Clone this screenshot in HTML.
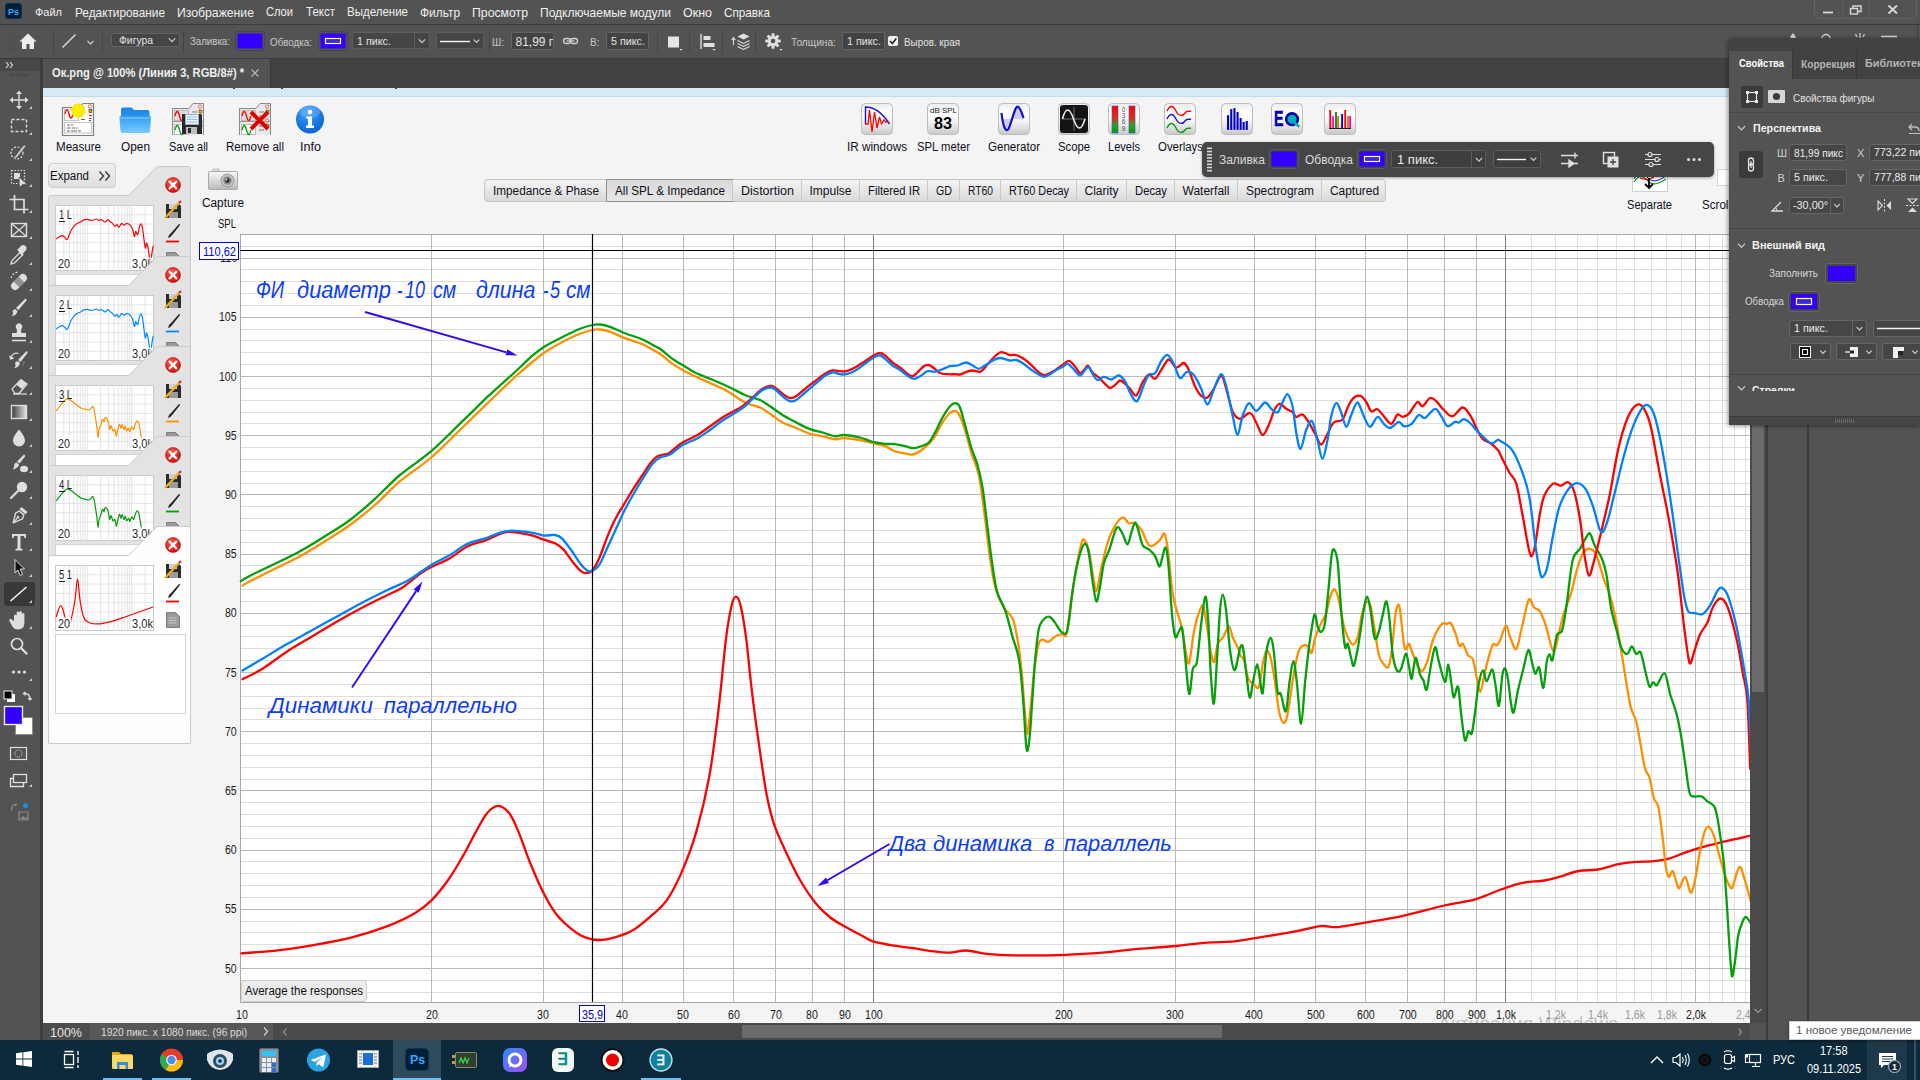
<!DOCTYPE html>
<html lang="ru"><head><meta charset="utf-8"><title>Ок.png @ 100% (Линия 3, RGB/8#) *</title>
<style>
html,body{margin:0;padding:0;}
body{width:1920px;height:1080px;overflow:hidden;position:relative;background:#535353;font-family:"Liberation Sans",sans-serif;}
.a{position:absolute;}
.t{position:absolute;white-space:pre;transform-origin:0 50%;}
svg{overflow:visible;}
</style></head><body>

<div class="a" id="canvas" style="left:43px;top:88px;width:1707px;height:935px;background:#f4f4f4;overflow:hidden;">
</div>
<div class="a" style="left:43px;top:88px;width:1707px;height:8px;background:#d6e9f7;"></div>
<div class="a" style="left:43px;top:96px;width:1707px;height:1px;background:#c4daeb;"></div>
<div class="a" style="left:233px;top:88px;width:2px;height:1px;background:#3a4650;"></div>
<div class="a" style="left:281px;top:88px;width:2px;height:1px;background:#3a4650;"></div>
<div class="a" style="left:395px;top:88px;width:2px;height:1px;background:#3a4650;"></div>
<svg class="a" style="left:0;top:0;" width="1750" height="1080" viewBox="0 0 1750 1080"><rect x="240" y="234" width="1510" height="768" fill="#fff"/><path d="M240 992.5H1750M240 980.5H1750M240 956.5H1750M240 944.5H1750M240 932.5H1750M240 921.5H1750M240 897.5H1750M240 885.5H1750M240 873.5H1750M240 861.5H1750M240 838.5H1750M240 826.5H1750M240 814.5H1750M240 802.5H1750M240 779.5H1750M240 767.5H1750M240 755.5H1750M240 743.5H1750M240 719.5H1750M240 708.5H1750M240 696.5H1750M240 684.5H1750M240 660.5H1750M240 648.5H1750M240 636.5H1750M240 625.5H1750M240 601.5H1750M240 589.5H1750M240 577.5H1750M240 565.5H1750M240 542.5H1750M240 530.5H1750M240 518.5H1750M240 506.5H1750M240 483.5H1750M240 471.5H1750M240 459.5H1750M240 447.5H1750M240 423.5H1750M240 412.5H1750M240 400.5H1750M240 388.5H1750M240 364.5H1750M240 352.5H1750M240 340.5H1750M240 329.5H1750M240 305.5H1750M240 293.5H1750M240 281.5H1750M240 269.5H1750M240 246.5H1750" stroke="#dedede" stroke-width="1" fill="none"/><path d="M1531.5 234V1002M1555.5 234V1002M1577.5 234V1002M1597.5 234V1002M1616.5 234V1002M1634.5 234V1002M1651.5 234V1002M1666.5 234V1002M1681.5 234V1002M1709.5 234V1002M1722.5 234V1002M1734.5 234V1002M1745.5 234V1002" stroke="#dedede" stroke-width="1" fill="none"/><path d="M240 968.5H1750M240 909.5H1750M240 850.5H1750M240 790.5H1750M240 731.5H1750M240 672.5H1750M240 613.5H1750M240 554.5H1750M240 494.5H1750M240 435.5H1750M240 376.5H1750M240 317.5H1750M240 258.5H1750" stroke="#b9b9b9" stroke-width="1" fill="none"/><path d="M431.5 234V1002M543.5 234V1002M622.5 234V1002M683.5 234V1002M733.5 234V1002M775.5 234V1002M812.5 234V1002M844.5 234V1002M1063.5 234V1002M1175.5 234V1002M1254.5 234V1002M1315.5 234V1002M1365.5 234V1002M1407.5 234V1002M1444.5 234V1002M1476.5 234V1002M1695.5 234V1002" stroke="#b9b9b9" stroke-width="1" fill="none"/><path d="M873.5 234V1002M1505.5 234V1002" stroke="#7d7d7d" stroke-width="1" fill="none"/><path d="M240.5 234V1002M240 1002.5H1750M240 234.5H1750" stroke="#a8a8a8" stroke-width="1" fill="none"/><path d="M241.5 953.3C247.5 952.8 265.6 951.8 277.8 950.4C290.0 949.0 302.5 947.0 314.8 944.8C327.2 942.7 339.5 940.6 351.9 937.4C364.2 934.2 378.4 929.6 388.9 925.6C399.4 921.5 407.7 917.5 414.8 913.3C421.9 909.1 425.9 905.9 431.5 900.4C437.0 894.8 442.9 887.4 448.1 880.0C453.4 872.6 458.3 864.0 463.0 855.9C467.6 847.9 471.9 839.0 475.9 831.9C479.9 824.8 483.3 817.7 487.0 813.3C490.7 809.0 494.4 805.9 498.1 805.9C501.9 805.9 505.9 809.0 509.3 813.3C512.7 817.7 515.1 823.8 518.5 831.9C521.9 839.9 525.6 851.6 529.6 861.5C533.6 871.4 538.3 882.5 542.6 891.1C546.9 899.8 550.9 907.2 555.6 913.3C560.2 919.5 565.4 924.1 570.4 928.1C575.3 932.2 580.2 935.4 585.2 937.4C590.1 939.4 595.1 940.0 600.0 940.0C604.9 940.0 609.3 939.1 614.8 937.4C620.4 935.7 627.2 933.7 633.3 930.0C639.5 926.3 646.3 920.1 651.9 915.2C657.4 910.2 661.7 907.5 666.7 900.4C671.6 893.3 676.5 884.0 681.5 872.6C686.4 861.2 691.7 847.9 696.3 831.9C700.9 815.8 705.6 796.7 709.3 776.3C713.0 755.9 715.7 732.5 718.5 709.6C721.3 686.8 723.8 656.5 725.9 639.3C728.1 622.0 729.8 613.0 731.5 605.9C733.1 598.8 734.4 596.7 735.9 596.7C737.5 596.7 739.0 598.8 740.7 605.9C742.5 613.0 744.4 625.1 746.3 639.3C748.1 653.5 749.7 673.2 751.9 691.1C754.0 709.0 756.8 729.4 759.3 746.7C761.7 764.0 764.2 781.9 766.7 794.8C769.1 807.8 771.0 815.2 774.1 824.4C777.2 833.7 780.9 841.1 785.2 850.4C789.5 859.6 795.1 871.4 800.0 880.0C804.9 888.6 809.9 896.0 814.8 902.2C819.8 908.4 824.7 913.0 829.6 917.0C834.6 921.0 838.9 923.1 844.4 926.3C850.0 929.5 858.1 933.8 863.0 936.3C867.8 938.8 868.5 940.0 873.8 941.6C879.0 943.1 887.5 944.5 894.4 945.7C901.2 946.8 908.7 947.5 915.0 948.4C921.3 949.4 926.5 950.5 932.2 951.2C937.9 951.9 943.6 952.7 949.4 952.6C955.1 952.4 960.3 950.3 966.6 950.5C972.9 950.7 979.2 953.1 987.2 953.9C995.2 954.7 1004.4 955.1 1014.7 955.3C1025.0 955.5 1037.6 955.5 1049.1 955.3C1060.5 955.1 1073.1 954.5 1083.4 953.9C1093.8 953.4 1102.3 952.7 1110.9 951.9C1119.5 951.1 1124.1 950.1 1135.0 949.1C1145.9 948.2 1164.2 947.1 1176.2 946.0C1188.3 944.9 1198.0 943.3 1207.2 942.6C1216.4 941.8 1223.2 942.3 1231.2 941.6C1239.3 940.8 1244.4 939.8 1255.3 938.1C1266.2 936.4 1285.7 933.3 1296.6 931.2C1307.4 929.2 1313.8 926.8 1320.6 926.1C1327.5 925.4 1330.4 927.7 1337.8 927.1C1345.3 926.6 1354.4 924.5 1365.3 922.7C1376.2 920.8 1389.9 918.6 1403.1 915.8C1416.3 912.9 1432.3 908.2 1444.4 905.5C1456.4 902.7 1466.1 901.9 1475.3 899.3C1484.5 896.7 1493.3 892.2 1499.4 890.0C1505.5 887.8 1507.5 887.1 1511.8 885.8C1516.1 884.5 1519.7 883.1 1525.2 882.3C1530.6 881.4 1538.7 881.4 1544.4 880.5C1550.1 879.6 1553.5 878.5 1559.2 876.9C1564.9 875.3 1572.1 872.2 1578.5 871.0C1584.9 869.8 1591.1 870.7 1597.7 869.5C1604.4 868.4 1612.5 865.4 1618.5 864.2C1624.4 863.0 1627.3 862.6 1633.3 862.1C1639.2 861.6 1648.1 861.8 1654.0 861.2C1659.9 860.6 1663.9 859.9 1668.8 858.6C1673.7 857.2 1678.2 855.1 1683.6 853.2C1689.0 851.4 1694.5 849.3 1701.4 847.3C1708.3 845.3 1716.8 843.4 1725.1 841.4C1733.3 839.4 1746.8 836.5 1751.1 835.5" stroke="#ff0000" stroke-width="2.3" fill="none" stroke-linejoin="round" stroke-linecap="round"/><path d="M242.5 585.5C243.8 584.8 244.6 584.0 250.0 581.2C255.4 578.5 266.7 572.9 275.0 568.8C283.3 564.6 291.7 560.8 300.0 556.2C308.3 551.7 316.7 546.5 325.0 541.2C333.3 536.0 341.7 531.0 350.0 525.0C358.3 519.0 366.7 512.3 375.0 505.0C383.3 497.7 390.6 489.2 400.0 481.2C409.4 473.3 420.8 466.5 431.2 457.5C441.7 448.5 453.0 436.7 462.5 427.5C472.0 418.3 479.6 410.8 488.2 402.5C496.9 394.2 507.2 384.2 514.5 377.5C521.8 370.8 526.6 366.8 531.8 362.5C536.9 358.2 540.1 355.4 545.2 352.0C550.4 348.6 556.7 345.0 562.5 342.0C568.3 339.0 575.0 335.8 580.0 333.8C585.0 331.8 589.2 330.7 592.5 330.0C595.8 329.3 597.1 329.2 600.0 329.5C602.9 329.8 605.8 330.3 610.0 331.8C614.2 333.2 619.6 336.2 625.0 338.2C630.4 340.3 637.1 341.9 642.5 344.2C647.9 346.6 654.6 350.9 657.5 352.5C660.4 354.1 657.5 351.9 660.0 353.8C662.5 355.6 668.8 361.0 672.5 363.8C676.2 366.5 678.8 367.9 682.5 370.0C686.2 372.1 690.4 374.1 695.0 376.2C699.6 378.4 704.6 380.5 710.0 383.0C715.4 385.5 721.7 388.0 727.5 391.2C733.3 394.5 739.6 399.8 745.0 402.5C750.4 405.2 755.8 405.6 760.0 407.5C764.2 409.4 766.2 411.2 770.0 413.8C773.8 416.2 778.3 420.2 782.5 422.5C786.7 424.8 790.4 425.6 795.0 427.5C799.6 429.4 805.4 432.3 810.0 433.8C814.6 435.2 818.3 435.3 822.5 436.2C826.7 437.2 831.5 438.9 835.0 439.2C838.5 439.6 839.6 438.1 843.8 438.2C847.9 438.4 855.2 439.2 860.0 440.0C864.8 440.8 868.3 442.0 872.5 443.0C876.7 444.0 881.2 444.9 885.0 446.2C888.8 447.6 891.9 450.1 895.0 451.2C898.1 452.4 900.8 452.7 903.8 453.2C906.7 453.8 909.8 454.8 912.5 454.5C915.2 454.2 917.3 453.0 920.0 451.2C922.7 449.5 926.2 446.2 928.8 443.8C931.2 441.2 932.7 439.8 935.0 436.2C937.3 432.7 940.0 426.4 942.5 422.5C945.0 418.6 947.8 414.9 950.0 413.0C952.2 411.1 954.1 410.7 955.8 411.2C957.4 411.8 958.5 413.1 960.0 416.2C961.5 419.4 963.1 424.0 965.0 430.0C966.9 436.0 969.0 445.0 971.2 452.5C973.5 460.0 976.6 464.9 978.8 475.0C980.9 485.1 982.6 499.5 984.4 513.3C986.3 527.1 988.1 545.3 990.0 557.8C991.9 570.3 993.2 580.0 995.6 588.3C997.9 596.7 1001.0 602.7 1003.9 607.8C1006.8 612.9 1010.5 613.3 1012.8 618.9C1015.1 624.4 1016.2 631.9 1017.8 641.1C1019.3 650.4 1020.8 662.9 1021.9 674.4C1023.1 686.0 1023.8 700.6 1024.7 710.6C1025.6 720.5 1026.6 734.2 1027.5 734.2C1028.4 734.2 1029.1 721.4 1030.3 710.6C1031.4 699.7 1033.1 680.0 1034.4 668.9C1035.8 657.8 1037.2 648.8 1038.6 643.9C1040.0 639.0 1041.2 640.0 1042.8 639.7C1044.4 639.4 1046.2 642.5 1048.3 641.9C1050.4 641.4 1053.0 637.7 1055.3 636.4C1057.6 635.1 1060.4 634.5 1062.2 634.2C1064.1 633.8 1065.0 639.0 1066.4 634.2C1067.8 629.3 1068.9 615.9 1070.6 605.0C1072.2 594.1 1074.3 579.3 1076.1 568.9C1078.0 558.5 1080.3 547.3 1081.7 542.5C1083.1 537.7 1083.3 539.1 1084.4 540.3C1085.6 541.4 1087.2 543.8 1088.6 549.4C1090.0 555.1 1091.5 567.5 1092.8 574.4C1094.1 581.4 1095.0 592.0 1096.4 591.1C1097.8 590.2 1099.2 577.2 1101.1 568.9C1103.1 560.6 1105.7 548.3 1108.1 541.1C1110.4 533.9 1112.6 529.8 1115.0 525.8C1117.4 521.9 1120.2 518.0 1122.5 517.5C1124.8 517.0 1126.9 522.1 1128.9 523.1C1130.9 524.0 1132.4 521.9 1134.4 523.1C1136.5 524.2 1138.8 526.2 1141.4 530.0C1143.9 533.8 1146.7 544.1 1149.7 545.8C1152.7 547.6 1157.0 542.6 1159.4 540.6C1161.9 538.5 1163.1 532.1 1164.4 533.6C1165.8 535.1 1166.3 538.9 1167.8 549.4C1169.3 560.0 1171.0 583.7 1173.3 596.7C1175.6 609.6 1179.6 618.0 1181.7 627.2C1183.8 636.5 1184.6 646.3 1185.8 652.2C1187.1 658.1 1187.8 666.5 1189.2 662.8C1190.6 659.1 1192.4 638.7 1194.2 630.0C1195.9 621.3 1198.2 614.5 1199.7 610.6C1201.2 606.6 1202.2 604.1 1203.3 606.4C1204.5 608.7 1205.4 616.8 1206.7 624.4C1207.9 632.1 1209.6 646.0 1210.8 652.2C1212.1 658.5 1213.0 663.3 1214.2 661.9C1215.3 660.6 1216.2 648.1 1217.8 643.9C1219.3 639.7 1221.5 639.9 1223.3 636.9C1225.2 634.0 1227.3 626.2 1228.9 626.4C1230.5 626.6 1231.4 634.5 1233.1 638.3C1234.7 642.2 1237.5 646.7 1238.6 649.4C1239.8 652.2 1239.1 653.1 1240.0 655.0C1240.9 656.9 1242.8 656.6 1244.2 660.6C1245.6 664.5 1246.7 674.7 1248.3 678.6C1250.0 682.5 1252.1 682.8 1253.9 684.2C1255.6 685.6 1257.4 690.4 1258.9 686.9C1260.4 683.5 1261.5 669.4 1262.8 663.3C1264.0 657.3 1265.1 651.8 1266.4 650.8C1267.7 649.9 1269.2 652.9 1270.6 657.8C1271.9 662.6 1273.3 671.2 1274.7 680.0C1276.1 688.8 1277.5 703.5 1278.9 710.6C1280.3 717.6 1281.7 721.6 1283.1 722.5C1284.4 723.4 1285.6 723.2 1287.2 716.1C1288.8 709.0 1290.9 690.6 1292.8 680.0C1294.6 669.4 1296.5 658.0 1298.3 652.2C1300.2 646.4 1302.3 646.2 1303.9 645.3C1305.5 644.4 1306.8 645.4 1308.1 646.7C1309.4 647.9 1310.5 654.2 1311.7 652.8C1312.8 651.4 1313.5 643.1 1315.0 638.3C1316.5 633.6 1318.7 628.6 1320.6 624.4C1322.4 620.3 1324.5 618.0 1326.1 613.3C1327.7 608.7 1328.9 600.7 1330.3 596.7C1331.7 592.6 1333.1 588.7 1334.4 589.2C1335.8 589.6 1337.0 593.1 1338.6 599.4C1340.2 605.8 1342.3 620.3 1344.2 627.2C1346.0 634.2 1348.1 638.2 1349.7 641.1C1351.3 644.0 1352.5 645.4 1353.9 644.4C1355.3 643.5 1356.7 640.7 1358.1 635.6C1359.4 630.4 1360.8 618.9 1362.2 613.3C1363.6 607.8 1365.0 603.4 1366.4 602.2C1367.8 601.1 1369.2 601.8 1370.6 606.4C1371.9 611.0 1373.3 621.9 1374.7 630.0C1376.1 638.1 1377.5 649.4 1378.9 655.0C1380.3 660.6 1381.4 661.4 1383.1 663.3C1384.7 665.3 1387.1 669.4 1388.6 666.7C1390.1 663.9 1391.1 655.6 1392.2 646.7C1393.4 637.8 1394.4 620.3 1395.6 613.3C1396.7 606.4 1398.0 604.1 1398.9 605.0C1399.8 605.9 1400.3 612.4 1401.1 618.9C1401.9 625.4 1403.1 638.8 1403.9 643.9C1404.7 649.0 1405.0 649.4 1405.8 649.4C1406.7 649.4 1407.8 643.4 1408.9 643.9C1410.0 644.4 1410.7 648.5 1412.2 652.2C1413.7 655.9 1416.1 663.0 1417.8 666.1C1419.5 669.2 1420.9 671.8 1422.5 670.8C1424.1 669.9 1425.7 665.7 1427.5 660.6C1429.3 655.4 1430.7 645.7 1433.1 639.7C1435.4 633.7 1439.1 627.1 1441.4 624.4C1443.7 621.8 1445.4 624.1 1446.9 623.9C1448.5 623.7 1449.2 621.6 1450.6 623.1C1451.9 624.5 1453.8 629.0 1455.3 632.8C1456.8 636.6 1458.1 644.0 1459.4 645.8C1460.7 647.7 1461.7 642.4 1463.1 643.9C1464.4 645.4 1466.2 652.5 1467.8 655.0C1469.4 657.5 1471.4 655.9 1472.8 659.2C1474.2 662.4 1474.9 669.0 1476.1 674.4C1477.4 679.9 1478.9 691.9 1480.3 691.9C1481.7 691.9 1483.1 680.1 1484.4 674.4C1485.8 668.8 1487.2 662.7 1488.6 657.8C1490.0 652.8 1491.4 646.8 1492.8 644.7C1494.2 642.6 1495.7 646.0 1496.9 645.3C1498.1 644.6 1498.5 643.8 1500.0 640.6C1501.5 637.3 1504.2 626.3 1505.9 625.8C1507.6 625.3 1508.6 633.8 1510.4 637.6C1512.1 641.5 1514.3 650.9 1516.3 648.9C1518.3 646.9 1520.1 634.0 1522.2 625.8C1524.3 617.6 1526.8 602.8 1528.7 599.7C1530.7 596.7 1532.2 605.5 1534.1 607.4C1535.9 609.4 1538.0 608.5 1540.0 611.6C1542.0 614.6 1543.7 619.2 1545.9 625.8C1548.1 632.4 1551.1 650.0 1553.3 651.0C1555.5 651.9 1557.5 637.9 1559.2 631.7C1561.0 625.5 1561.7 620.4 1563.7 613.9C1565.6 607.5 1568.8 600.6 1571.1 593.2C1573.3 585.8 1575.0 576.2 1577.0 569.5C1579.0 562.9 1580.8 556.7 1582.9 553.2C1585.0 549.8 1587.5 548.5 1589.7 548.8C1591.9 549.0 1593.9 549.8 1596.2 554.7C1598.6 559.7 1601.2 571.0 1603.6 578.4C1606.1 585.8 1608.8 591.2 1611.0 599.1C1613.3 607.0 1615.0 615.4 1617.0 625.8C1618.9 636.2 1620.7 648.1 1622.9 661.3C1625.1 674.6 1628.1 695.1 1630.3 705.2C1632.5 715.2 1634.5 714.8 1636.2 721.5C1637.9 728.1 1639.2 737.3 1640.7 745.1C1642.1 753.0 1643.6 763.4 1645.1 768.8C1646.6 774.3 1648.1 772.8 1649.5 777.7C1651.0 782.7 1652.5 793.5 1654.0 798.5C1655.5 803.4 1656.9 800.4 1658.4 807.3C1659.9 814.2 1661.6 830.0 1662.9 839.9C1664.1 849.8 1664.8 860.4 1665.8 866.6C1666.8 872.7 1667.7 876.2 1668.8 876.9C1669.9 877.7 1671.4 870.3 1672.6 871.0C1673.9 871.7 1675.1 878.5 1676.2 881.4C1677.3 884.2 1677.7 888.9 1679.2 888.2C1680.6 887.4 1683.4 876.6 1685.1 876.9C1686.8 877.3 1688.4 887.8 1689.5 890.3C1690.7 892.7 1690.9 893.7 1691.9 891.7C1692.9 889.8 1694.1 885.1 1695.4 878.4C1696.8 871.7 1698.4 859.4 1699.9 851.8C1701.4 844.1 1702.9 836.7 1704.3 832.5C1705.7 828.3 1706.7 826.3 1708.2 826.6C1709.7 826.8 1711.4 829.3 1713.2 834.0C1715.0 838.7 1717.2 847.8 1719.1 854.7C1721.1 861.6 1723.3 870.3 1725.1 875.4C1726.8 880.6 1728.3 883.8 1729.5 885.8C1730.7 887.8 1731.2 889.5 1732.5 887.3C1733.7 885.1 1735.6 875.8 1736.9 872.5C1738.2 869.1 1739.2 866.2 1740.5 867.2C1741.7 868.1 1742.5 872.6 1744.3 878.4C1746.1 884.2 1750.0 898.1 1751.1 902.1" stroke="#ff8e00" stroke-width="2.3" fill="none" stroke-linejoin="round" stroke-linecap="round"/><path d="M240.8 581.2C242.3 580.3 244.3 578.7 250.0 575.8C255.7 572.8 266.7 567.8 275.0 563.8C283.3 559.7 291.7 555.8 300.0 551.2C308.3 546.7 316.7 541.5 325.0 536.2C333.3 531.0 341.7 526.2 350.0 520.0C358.3 513.8 366.7 506.2 375.0 498.8C383.3 491.2 390.6 482.9 400.0 475.0C409.4 467.1 420.8 460.2 431.2 451.2C441.7 442.3 453.0 430.4 462.5 421.2C472.0 412.1 479.6 404.4 488.2 396.2C496.9 388.1 507.2 379.2 514.5 372.5C521.8 365.8 526.7 360.6 531.8 356.2C536.8 351.9 539.9 349.5 545.0 346.2C550.1 343.0 556.7 339.9 562.5 337.0C568.3 334.1 575.0 330.8 580.0 328.8C585.0 326.8 589.2 325.7 592.5 325.0C595.8 324.3 597.1 324.2 600.0 324.5C602.9 324.8 605.8 325.3 610.0 326.8C614.2 328.2 619.6 331.1 625.0 333.2C630.4 335.4 637.1 337.1 642.5 339.5C647.9 341.9 654.6 346.0 657.5 347.5C660.4 349.0 657.5 346.9 660.0 348.8C662.5 350.6 668.8 356.0 672.5 358.8C676.2 361.5 678.8 362.7 682.5 365.0C686.2 367.3 690.4 370.2 695.0 372.5C699.6 374.8 704.2 376.2 710.0 378.8C715.8 381.2 724.2 384.8 730.0 387.5C735.8 390.2 740.0 392.9 745.0 395.0C750.0 397.1 755.8 398.1 760.0 400.0C764.2 401.9 766.2 403.8 770.0 406.2C773.8 408.8 778.3 412.4 782.5 415.0C786.7 417.6 790.4 419.4 795.0 421.8C799.6 424.1 805.4 427.5 810.0 429.2C814.6 431.0 818.3 431.3 822.5 432.5C826.7 433.7 831.5 435.8 835.0 436.2C838.5 436.7 839.6 434.8 843.8 435.0C847.9 435.2 855.2 436.4 860.0 437.5C864.8 438.6 868.3 440.7 872.5 441.8C876.7 442.8 881.2 443.3 885.0 443.8C888.8 444.2 891.7 443.8 895.0 444.2C898.3 444.7 901.9 445.6 905.0 446.2C908.1 446.9 911.0 448.2 913.8 448.2C916.5 448.2 918.8 447.2 921.2 446.2C923.8 445.3 926.5 444.8 928.8 442.5C931.0 440.2 932.7 436.7 935.0 432.5C937.3 428.3 940.0 421.9 942.5 417.5C945.0 413.1 947.8 408.6 950.0 406.2C952.2 403.9 954.1 403.0 955.8 403.2C957.4 403.5 958.5 403.9 960.0 407.5C961.5 411.1 963.1 418.3 965.0 425.0C966.9 431.7 969.2 440.8 971.2 447.5C973.3 454.2 975.6 458.3 977.5 465.0C979.4 471.7 981.1 479.4 982.5 487.5C983.9 495.6 984.4 501.6 985.8 513.3C987.3 525.0 989.5 544.8 991.4 557.8C993.2 570.7 994.6 582.3 996.9 591.1C999.3 599.9 1002.7 603.1 1005.3 610.6C1007.8 618.0 1009.9 627.2 1012.2 635.6C1014.5 643.9 1017.3 649.4 1019.2 660.6C1021.0 671.7 1022.3 689.3 1023.3 702.2C1024.4 715.2 1024.9 730.2 1025.6 738.3C1026.2 746.4 1026.7 752.2 1027.5 750.8C1028.3 749.4 1029.1 743.7 1030.3 730.0C1031.4 716.3 1033.1 685.6 1034.4 668.9C1035.8 652.2 1037.0 638.3 1038.6 630.0C1040.2 621.7 1042.3 621.1 1044.2 618.9C1046.0 616.7 1047.9 616.2 1049.7 616.9C1051.6 617.6 1053.4 620.6 1055.3 623.1C1057.1 625.5 1059.0 629.8 1060.8 631.4C1062.7 633.0 1065.0 634.9 1066.4 632.8C1067.8 630.7 1068.0 626.8 1069.2 618.9C1070.3 611.0 1071.7 595.7 1073.3 585.6C1075.0 575.4 1077.0 564.7 1078.9 557.8C1080.7 550.8 1082.8 544.8 1084.4 543.9C1086.1 543.0 1087.2 545.7 1088.6 552.2C1090.0 558.7 1091.5 574.6 1092.8 582.8C1094.1 591.0 1095.2 600.5 1096.4 601.4C1097.5 602.3 1098.5 594.7 1099.7 588.3C1101.0 582.0 1102.3 569.8 1103.9 563.3C1105.5 556.9 1107.6 554.8 1109.4 549.4C1111.3 544.1 1113.5 535.1 1115.0 531.4C1116.5 527.7 1117.0 526.8 1118.3 527.2C1119.6 527.7 1121.2 531.3 1122.8 534.2C1124.3 537.0 1126.0 544.9 1127.5 544.4C1129.0 544.0 1130.4 535.0 1131.7 531.4C1133.0 527.7 1134.1 522.5 1135.3 522.5C1136.4 522.5 1137.4 527.6 1138.6 531.4C1139.9 535.2 1140.9 542.2 1142.8 545.3C1144.6 548.4 1147.6 548.1 1149.7 550.0C1151.8 551.9 1153.7 553.6 1155.3 556.4C1156.9 559.2 1158.3 566.4 1159.4 566.7C1160.6 566.9 1161.2 561.0 1162.2 557.8C1163.2 554.6 1164.5 546.6 1165.6 547.5C1166.6 548.4 1167.3 552.4 1168.3 563.3C1169.4 574.3 1170.8 601.1 1171.9 613.3C1173.1 625.6 1174.1 633.9 1175.3 636.9C1176.4 640.0 1177.7 632.8 1178.9 631.4C1180.0 630.0 1181.2 624.2 1182.2 628.6C1183.3 633.0 1184.1 646.9 1185.3 657.8C1186.4 668.7 1187.9 692.0 1189.2 693.9C1190.4 695.7 1191.5 674.2 1192.8 668.9C1194.1 663.6 1195.6 669.4 1196.9 661.9C1198.3 654.5 1199.7 635.3 1201.1 624.4C1202.5 613.6 1204.1 597.6 1205.3 596.7C1206.4 595.7 1207.1 605.9 1208.1 618.9C1209.0 631.9 1209.9 660.3 1210.8 674.4C1211.8 688.6 1212.9 705.9 1213.9 703.6C1214.9 701.3 1215.9 676.1 1216.9 660.6C1218.0 645.0 1219.0 621.5 1220.0 610.6C1221.0 599.6 1221.8 594.7 1222.8 594.7C1223.8 594.7 1224.9 601.0 1226.1 610.6C1227.4 620.1 1228.9 642.3 1230.3 652.2C1231.7 662.2 1233.1 669.8 1234.4 670.3C1235.8 670.7 1237.7 658.7 1238.6 655.0C1239.5 651.3 1239.3 649.4 1240.0 648.1C1240.7 646.7 1241.8 642.7 1242.8 646.7C1243.8 650.6 1245.0 663.2 1246.1 671.7C1247.3 680.1 1248.5 696.1 1249.7 697.5C1250.9 698.9 1252.1 685.6 1253.3 680.0C1254.6 674.4 1256.1 664.2 1257.2 664.2C1258.3 664.2 1259.1 675.3 1260.0 680.0C1260.9 684.7 1261.7 697.1 1262.8 692.5C1263.8 687.9 1265.1 661.3 1266.4 652.2C1267.7 643.1 1269.3 637.8 1270.6 637.8C1271.8 637.8 1272.7 643.3 1273.9 652.2C1275.0 661.1 1276.3 684.2 1277.5 691.1C1278.7 698.1 1279.4 690.5 1280.8 693.9C1282.2 697.3 1284.4 713.2 1285.8 711.4C1287.3 709.5 1288.2 691.2 1289.4 682.8C1290.7 674.4 1292.1 661.1 1293.3 661.1C1294.6 661.1 1295.6 672.4 1296.9 682.8C1298.2 693.2 1299.7 724.1 1301.1 723.6C1302.5 723.1 1303.9 693.3 1305.3 680.0C1306.7 666.7 1307.9 654.8 1309.4 643.9C1311.0 633.0 1313.1 617.5 1314.4 614.7C1315.8 611.9 1316.7 624.4 1317.8 627.2C1318.9 630.1 1320.0 632.4 1321.1 631.9C1322.3 631.5 1323.5 631.2 1324.7 624.4C1325.9 617.6 1327.2 602.7 1328.3 591.1C1329.5 579.5 1330.6 561.9 1331.7 555.0C1332.7 548.1 1333.4 548.6 1334.4 550.0C1335.5 551.4 1336.6 552.8 1337.8 563.3C1338.9 573.9 1340.2 599.4 1341.4 613.3C1342.6 627.2 1343.9 641.6 1345.0 646.7C1346.1 651.8 1346.8 642.0 1347.8 643.9C1348.8 645.7 1350.1 654.2 1351.1 657.8C1352.1 661.4 1352.7 667.4 1353.9 665.6C1355.0 663.7 1356.4 655.8 1358.1 646.7C1359.7 637.5 1362.1 618.9 1363.6 610.6C1365.1 602.2 1366.1 596.7 1367.2 596.7C1368.4 596.7 1369.3 603.6 1370.6 610.6C1371.8 617.5 1373.3 634.9 1374.7 638.3C1376.1 641.8 1377.5 635.6 1378.9 631.4C1380.3 627.2 1381.8 618.3 1383.1 613.3C1384.3 608.3 1385.3 600.5 1386.4 601.4C1387.5 602.3 1388.4 610.0 1389.4 618.9C1390.5 627.8 1391.5 646.4 1392.8 655.0C1394.0 663.6 1395.6 668.0 1396.9 670.3C1398.3 672.6 1399.6 671.7 1401.1 668.9C1402.6 666.1 1404.5 654.1 1405.8 653.6C1407.1 653.1 1407.9 661.9 1408.9 666.1C1409.9 670.3 1410.6 680.0 1411.7 678.6C1412.8 677.2 1414.2 658.5 1415.6 657.8C1416.9 657.1 1418.7 670.7 1420.0 674.4C1421.3 678.1 1422.2 677.5 1423.3 680.0C1424.4 682.5 1425.5 691.6 1426.7 689.7C1427.8 687.9 1428.9 676.0 1430.3 668.9C1431.7 661.8 1433.6 648.6 1435.0 647.2C1436.4 645.8 1436.9 654.8 1438.6 660.6C1440.3 666.3 1443.4 681.2 1445.0 681.9C1446.6 682.6 1447.2 664.1 1448.3 664.7C1449.4 665.3 1450.7 680.1 1451.7 685.6C1452.6 691.0 1452.8 697.3 1453.9 697.5C1455.0 697.7 1456.8 683.8 1458.1 686.9C1459.3 690.0 1460.2 707.2 1461.4 716.1C1462.5 725.0 1463.8 737.7 1465.0 740.3C1466.2 742.8 1467.2 732.6 1468.3 731.4C1469.5 730.1 1470.7 736.7 1471.9 732.8C1473.1 728.8 1474.4 716.1 1475.6 707.8C1476.7 699.4 1477.6 689.0 1478.9 682.8C1480.1 676.5 1481.8 670.5 1483.1 670.3C1484.4 670.0 1485.1 681.5 1486.7 681.4C1488.2 681.2 1490.7 668.8 1492.2 669.4C1493.7 670.1 1494.4 679.5 1495.6 685.6C1496.7 691.6 1497.7 707.7 1498.9 705.8C1500.0 704.0 1501.4 680.6 1502.5 674.4C1503.6 668.3 1504.4 668.0 1505.3 668.9C1506.2 669.8 1507.1 674.4 1508.1 680.0C1509.0 685.6 1509.9 696.8 1510.8 702.2C1511.8 707.6 1512.5 714.4 1513.6 712.5C1514.8 710.6 1516.2 698.4 1517.8 691.1C1519.4 683.8 1521.6 675.7 1523.3 668.9C1525.1 662.0 1526.9 651.4 1528.3 650.0C1529.7 648.6 1530.5 656.6 1531.7 660.6C1532.8 664.5 1534.0 672.5 1535.3 673.6C1536.5 674.8 1537.8 665.1 1539.2 667.5C1540.5 669.9 1542.0 688.9 1543.3 687.8C1544.6 686.6 1545.9 666.1 1546.9 660.6C1548.0 655.0 1548.8 654.5 1549.7 654.4C1550.6 654.4 1551.3 663.1 1552.5 660.0C1553.7 656.9 1555.1 640.5 1556.7 635.6C1558.3 630.6 1560.5 635.3 1562.2 630.2C1563.8 625.1 1564.9 616.7 1566.6 605.1C1568.4 593.5 1570.3 570.0 1572.6 560.6C1574.8 551.3 1577.5 553.0 1580.0 548.8C1582.4 544.6 1585.6 537.9 1587.4 535.5C1589.1 533.0 1589.1 532.3 1590.3 534.0C1591.6 535.7 1592.8 541.6 1594.8 545.8C1596.7 550.0 1600.2 554.2 1602.2 559.2C1604.1 564.1 1605.1 567.3 1606.6 575.4C1608.1 583.6 1609.3 598.6 1611.0 608.0C1612.8 617.4 1615.2 625.0 1617.0 631.7C1618.7 638.4 1619.7 644.3 1621.4 648.0C1623.1 651.7 1625.6 654.2 1627.3 653.9C1629.1 653.7 1630.3 646.5 1631.8 646.5C1633.3 646.5 1634.7 652.9 1636.2 653.9C1637.7 654.9 1639.2 649.7 1640.7 652.4C1642.1 655.2 1643.6 664.5 1645.1 670.2C1646.6 675.9 1648.2 684.5 1649.5 686.5C1650.9 688.5 1651.9 682.3 1653.1 682.1C1654.3 681.8 1655.1 686.5 1656.9 685.0C1658.8 683.5 1662.4 672.7 1664.4 673.2C1666.3 673.7 1667.8 684.4 1668.8 688.0C1669.8 691.6 1669.0 690.7 1670.3 694.8C1671.5 698.9 1674.5 706.2 1676.2 712.6C1677.9 719.0 1679.2 724.9 1680.6 733.3C1682.1 741.7 1683.6 753.0 1685.1 762.9C1686.6 772.8 1688.0 787.0 1689.5 792.5C1691.0 798.1 1692.0 795.7 1694.0 796.4C1695.9 797.0 1699.1 795.5 1701.4 796.4C1703.6 797.2 1705.1 799.6 1707.3 801.4C1709.5 803.2 1712.7 802.9 1714.7 807.3C1716.7 811.8 1717.7 819.2 1719.1 828.1C1720.6 836.9 1722.3 848.8 1723.6 860.6C1724.8 872.5 1725.6 886.3 1726.5 899.1C1727.4 912.0 1728.2 926.3 1728.9 937.6C1729.6 949.0 1730.4 960.8 1731.0 967.2C1731.6 973.7 1731.7 977.6 1732.5 976.1C1733.2 974.6 1734.4 965.3 1735.4 958.4C1736.4 951.5 1737.1 940.8 1738.4 934.7C1739.6 928.5 1741.6 924.3 1742.8 921.3C1744.1 918.4 1744.4 916.6 1745.8 916.9C1747.2 917.2 1750.2 922.3 1751.1 923.4" stroke="#04a00c" stroke-width="2.3" fill="none" stroke-linejoin="round" stroke-linecap="round"/><path d="M242.5 679.2C245.8 677.5 255.0 673.4 262.5 668.8C270.0 664.1 279.2 656.7 287.5 651.2C295.8 645.8 304.2 641.2 312.5 636.2C320.8 631.2 329.2 626.0 337.5 621.2C345.8 616.5 354.2 611.9 362.5 607.5C370.8 603.1 380.8 598.3 387.5 595.0C394.2 591.7 397.1 591.0 402.5 587.5C407.9 584.0 415.2 577.2 420.0 573.8C424.8 570.3 426.2 569.6 431.2 567.0C436.2 564.4 444.0 561.7 450.0 558.2C456.0 554.8 461.6 549.2 467.5 546.2C473.4 543.3 480.2 542.3 485.6 540.3C490.9 538.3 495.7 535.6 499.4 534.2C503.1 532.8 504.5 532.2 507.8 531.9C511.0 531.7 514.7 532.2 518.9 532.8C523.1 533.4 528.6 534.4 532.8 535.6C536.9 536.7 540.2 538.4 543.9 539.7C547.6 541.0 551.8 541.7 555.0 543.3C558.2 545.0 560.6 546.6 563.3 549.4C566.1 552.3 568.9 557.1 571.7 560.6C574.4 564.0 577.6 568.2 580.0 570.3C582.4 572.4 584.0 573.1 586.1 573.1C588.2 573.1 590.3 572.8 592.5 570.3C594.7 567.7 596.9 563.6 599.4 557.8C602.0 552.0 605.0 542.3 607.8 535.6C610.6 528.8 613.3 522.8 616.1 517.5C618.9 512.2 621.7 508.2 624.4 503.6C627.2 499.0 629.8 494.5 632.8 489.7C635.8 485.0 639.6 479.3 642.5 475.0C645.4 470.7 647.5 466.9 650.0 463.8C652.5 460.6 654.6 457.9 657.5 456.2C660.4 454.6 665.4 454.4 667.5 453.8C669.6 453.1 667.5 454.4 670.0 452.5C672.5 450.6 677.9 445.4 682.5 442.5C687.1 439.6 692.9 437.7 697.5 435.0C702.1 432.3 705.8 429.2 710.0 426.2C714.2 423.3 718.5 420.0 722.5 417.5C726.5 415.0 730.4 413.1 733.8 411.2C737.1 409.4 739.4 408.5 742.5 406.2C745.6 404.0 749.2 400.4 752.5 397.5C755.8 394.6 759.6 390.7 762.5 388.8C765.4 386.8 767.9 386.0 770.0 385.8C772.1 385.5 772.9 386.2 775.0 387.5C777.1 388.8 780.0 392.0 782.5 393.8C785.0 395.5 787.7 397.6 790.0 398.0C792.3 398.4 793.8 397.8 796.2 396.2C798.8 394.7 801.9 391.2 805.0 388.8C808.1 386.2 811.7 383.8 815.0 381.2C818.3 378.8 822.1 375.5 825.0 373.8C827.9 372.0 830.0 370.9 832.5 370.5C835.0 370.1 837.7 371.1 840.0 371.2C842.3 371.4 843.8 371.9 846.2 371.2C848.8 370.6 851.9 369.2 855.0 367.5C858.1 365.8 861.9 363.2 865.0 361.2C868.1 359.2 871.2 356.9 873.8 355.5C876.2 354.1 878.1 353.0 880.0 353.0C881.9 353.0 882.9 353.9 885.0 355.5C887.1 357.1 890.0 360.5 892.5 362.5C895.0 364.5 897.5 365.6 900.0 367.5C902.5 369.4 905.4 372.3 907.5 373.8C909.6 375.2 910.8 376.5 912.5 376.2C914.2 376.0 915.6 374.2 917.5 372.5C919.4 370.8 921.9 367.5 923.8 366.2C925.6 365.0 927.1 364.7 928.8 365.0C930.4 365.3 931.9 366.7 933.8 368.0C935.6 369.3 937.7 372.0 940.0 373.0C942.3 374.0 945.0 374.0 947.5 374.2C950.0 374.5 952.9 374.2 955.0 374.2C957.1 374.3 958.1 374.9 960.0 374.5C961.9 374.1 964.2 372.7 966.2 372.0C968.3 371.3 970.2 370.5 972.5 370.5C974.8 370.5 977.9 372.2 980.0 371.8C982.1 371.2 982.9 369.7 985.0 367.5C987.1 365.3 990.0 361.2 992.5 358.8C995.0 356.2 997.9 353.5 1000.0 352.5C1002.1 351.5 1003.3 352.6 1005.0 353.0C1006.7 353.4 1008.1 354.7 1010.0 355.0C1011.9 355.3 1014.2 354.5 1016.2 355.0C1018.3 355.5 1020.2 356.5 1022.5 358.0C1024.8 359.5 1027.5 361.5 1030.0 363.8C1032.5 366.0 1035.2 369.4 1037.5 371.2C1039.8 373.1 1041.7 374.7 1043.8 375.0C1045.8 375.3 1047.9 373.9 1050.0 373.0C1052.1 372.1 1054.2 370.8 1056.2 369.5C1058.3 368.2 1060.4 366.5 1062.5 365.0C1064.6 363.5 1066.9 360.8 1068.8 360.8C1070.6 360.8 1071.9 363.0 1073.8 365.0C1075.6 367.0 1078.1 372.4 1080.0 373.0C1081.9 373.6 1083.7 370.0 1085.0 368.8C1086.3 367.5 1086.8 365.1 1088.0 365.8C1089.2 366.4 1090.7 370.5 1092.5 372.5C1094.3 374.5 1096.7 375.6 1098.8 377.5C1100.8 379.4 1103.1 382.0 1105.0 383.8C1106.9 385.5 1108.3 387.8 1110.0 388.0C1111.7 388.2 1113.3 386.2 1115.0 385.0C1116.7 383.8 1118.3 380.7 1120.0 380.5C1121.7 380.3 1123.3 382.4 1125.0 383.8C1126.7 385.1 1128.1 386.8 1130.0 388.8C1131.9 390.7 1134.2 396.5 1136.2 395.5C1138.3 394.5 1140.4 386.0 1142.5 382.5C1144.6 379.0 1146.7 375.1 1148.8 374.5C1150.8 373.9 1152.9 379.5 1155.0 378.8C1157.1 378.0 1159.0 373.2 1161.2 370.0C1163.5 366.8 1166.2 359.9 1168.8 359.5C1171.2 359.1 1173.8 366.9 1176.2 367.5C1178.8 368.1 1181.7 362.6 1183.8 363.0C1185.8 363.4 1186.9 366.1 1188.8 370.0C1190.6 373.9 1192.9 382.0 1195.0 386.2C1197.1 390.5 1199.2 393.9 1201.2 395.8C1203.3 397.6 1205.4 398.7 1207.5 397.5C1209.6 396.3 1211.5 392.3 1213.8 388.8C1216.0 385.2 1219.2 376.2 1221.2 376.2C1223.3 376.2 1224.4 382.9 1226.2 388.8C1228.1 394.6 1230.2 406.2 1232.5 411.2C1234.8 416.2 1237.1 418.5 1240.0 418.8C1242.9 419.0 1247.3 412.4 1250.0 413.0C1252.7 413.6 1254.2 418.8 1256.2 422.5C1258.3 426.2 1260.4 434.6 1262.5 435.0C1264.6 435.4 1266.7 429.4 1268.8 425.0C1270.8 420.6 1273.1 412.3 1275.0 408.8C1276.9 405.2 1278.1 403.8 1280.0 403.8C1281.9 403.8 1284.2 407.4 1286.2 408.8C1288.3 410.1 1290.8 410.6 1292.5 412.0C1294.2 413.4 1294.6 416.6 1296.2 417.0C1297.9 417.4 1300.4 413.6 1302.5 414.5C1304.6 415.4 1306.7 419.3 1308.8 422.5C1310.8 425.7 1312.9 430.1 1315.0 433.8C1317.1 437.4 1319.2 444.5 1321.2 444.5C1323.3 444.5 1325.4 437.4 1327.5 433.8C1329.6 430.1 1331.2 424.9 1333.8 422.5C1336.2 420.1 1340.0 422.4 1342.5 419.5C1345.0 416.6 1346.7 408.8 1348.8 405.0C1350.8 401.2 1352.9 398.2 1355.0 396.8C1357.1 395.3 1359.4 395.4 1361.2 396.2C1363.1 397.1 1364.6 399.5 1366.2 402.0C1367.9 404.5 1369.4 410.0 1371.2 411.2C1373.1 412.5 1375.4 408.4 1377.5 409.2C1379.6 410.1 1381.5 413.8 1383.8 416.2C1386.0 418.7 1389.0 424.0 1391.2 423.8C1393.5 423.5 1395.6 415.7 1397.5 414.5C1399.4 413.3 1400.6 416.9 1402.5 416.8C1404.4 416.6 1406.2 416.2 1408.8 413.8C1411.2 411.3 1415.2 403.2 1417.5 402.0C1419.8 400.8 1420.4 406.9 1422.5 406.2C1424.6 405.6 1427.7 398.8 1430.0 398.0C1432.3 397.2 1434.0 399.2 1436.2 401.2C1438.5 403.2 1441.0 407.5 1443.8 410.0C1446.5 412.5 1449.4 416.7 1452.5 416.2C1455.6 415.8 1459.6 407.7 1462.5 407.5C1465.4 407.3 1467.7 411.7 1470.0 415.0C1472.3 418.3 1474.2 423.5 1476.2 427.5C1478.3 431.5 1480.0 436.0 1482.5 438.8C1485.0 441.5 1488.5 441.7 1491.2 443.8C1494.0 445.8 1497.3 449.5 1498.8 451.2C1500.2 453.0 1498.3 450.6 1500.0 454.0C1501.7 457.5 1506.2 466.9 1508.9 471.8C1511.6 476.7 1514.1 476.7 1516.3 483.6C1518.5 490.6 1520.2 502.9 1522.2 513.3C1524.2 523.6 1526.6 538.7 1528.1 545.8C1529.7 553.0 1530.5 556.7 1531.7 556.2C1532.9 555.7 1534.2 550.0 1535.5 542.9C1536.9 535.7 1538.5 521.2 1540.0 513.3C1541.5 505.4 1542.2 500.4 1544.4 495.5C1546.6 490.6 1550.6 485.3 1553.3 483.6C1556.0 482.0 1558.2 486.0 1560.7 485.7C1563.2 485.5 1565.9 481.3 1568.1 482.2C1570.3 483.1 1572.1 484.9 1574.0 491.0C1576.0 497.2 1578.2 508.6 1580.0 519.2C1581.7 529.8 1582.9 545.3 1584.4 554.7C1585.9 564.1 1587.4 574.0 1588.8 575.4C1590.3 576.9 1591.3 570.5 1593.3 563.6C1595.3 556.7 1598.0 545.3 1600.7 534.0C1603.4 522.6 1606.6 509.8 1609.6 495.5C1612.5 481.2 1615.5 460.9 1618.5 448.1C1621.4 435.3 1624.4 425.7 1627.3 418.5C1630.3 411.3 1633.5 406.9 1636.2 405.2C1638.9 403.4 1641.2 404.4 1643.6 408.1C1646.1 411.8 1648.3 416.3 1651.0 427.4C1653.7 438.5 1656.9 459.5 1659.9 474.8C1662.9 490.1 1665.8 502.9 1668.8 519.2C1671.8 535.5 1675.2 555.2 1677.7 572.5C1680.1 589.8 1681.9 609.0 1683.6 622.8C1685.3 636.6 1686.9 648.6 1688.0 655.4C1689.2 662.2 1689.4 663.9 1690.4 663.4C1691.4 662.9 1692.4 657.2 1694.0 652.4C1695.5 647.6 1697.7 639.6 1699.9 634.7C1702.1 629.7 1705.1 627.5 1707.3 622.8C1709.5 618.1 1711.0 610.6 1713.2 606.5C1715.4 602.5 1718.1 598.3 1720.6 598.5C1723.1 598.8 1725.3 601.0 1728.0 608.0C1730.7 615.0 1734.4 629.7 1736.9 640.6C1739.4 651.5 1741.1 663.3 1742.8 673.2C1744.6 683.0 1746.0 683.9 1747.3 699.8C1748.5 715.8 1749.7 757.3 1750.2 768.8" stroke="#ff0000" stroke-width="2.3" fill="none" stroke-linejoin="round" stroke-linecap="round"/><path d="M242.5 670.5C245.8 668.5 255.0 663.2 262.5 658.8C270.0 654.3 279.2 648.5 287.5 643.8C295.8 639.0 304.2 634.6 312.5 630.0C320.8 625.4 329.2 620.8 337.5 616.2C345.8 611.7 354.2 606.9 362.5 602.5C370.8 598.1 380.0 593.6 387.5 590.0C395.0 586.4 400.2 584.9 407.5 580.8C414.8 576.6 424.2 569.3 431.2 565.0C438.3 560.7 444.0 558.5 450.0 555.0C456.0 551.5 461.6 546.5 467.5 543.8C473.4 541.0 480.2 540.2 485.6 538.3C490.9 536.5 495.5 534.0 499.4 532.8C503.4 531.5 505.9 531.1 509.2 530.8C512.4 530.6 515.0 530.8 518.9 531.1C522.8 531.4 528.6 532.0 532.8 532.8C536.9 533.5 540.2 535.2 543.9 535.6C547.6 535.9 552.0 534.5 555.0 535.0C558.0 535.5 559.2 535.7 561.9 538.3C564.7 541.0 568.7 546.7 571.7 550.8C574.7 555.0 577.5 560.1 580.0 563.3C582.5 566.6 584.9 569.0 586.9 570.3C589.0 571.5 590.4 571.8 592.5 570.8C594.6 569.9 596.9 568.8 599.4 564.7C602.0 560.7 605.0 552.7 607.8 546.7C610.6 540.6 613.3 534.6 616.1 528.6C618.9 522.6 621.7 516.1 624.4 510.6C627.2 505.0 629.4 501.2 632.8 495.3C636.2 489.4 641.7 480.3 645.0 475.0C648.3 469.7 650.0 466.7 652.5 463.8C655.0 460.8 657.1 459.0 660.0 457.5C662.9 456.0 666.2 456.6 670.0 454.5C673.8 452.4 677.9 447.7 682.5 445.0C687.1 442.3 692.9 440.8 697.5 438.2C702.1 435.8 705.8 433.0 710.0 430.0C714.2 427.0 718.5 423.2 722.5 420.5C726.5 417.8 730.0 416.1 733.8 413.8C737.5 411.4 741.9 408.8 745.0 406.2C748.1 403.8 749.6 401.5 752.5 398.8C755.4 396.0 759.6 391.9 762.5 390.0C765.4 388.1 767.9 387.6 770.0 387.5C772.1 387.4 772.9 387.8 775.0 389.2C777.1 390.7 780.0 394.2 782.5 396.2C785.0 398.2 787.7 400.6 790.0 401.2C792.3 401.9 793.8 401.5 796.2 400.0C798.8 398.5 801.9 395.1 805.0 392.5C808.1 389.9 811.7 387.0 815.0 384.2C818.3 381.5 822.1 377.7 825.0 375.8C827.9 373.8 830.0 372.8 832.5 372.5C835.0 372.2 837.7 374.0 840.0 374.2C842.3 374.5 843.8 374.8 846.2 374.2C848.8 373.7 851.9 372.5 855.0 370.8C858.1 369.0 861.9 366.0 865.0 363.8C868.1 361.5 871.2 358.9 873.8 357.5C876.2 356.1 878.1 355.3 880.0 355.5C881.9 355.7 882.9 357.1 885.0 358.8C887.1 360.4 890.0 363.6 892.5 365.5C895.0 367.4 897.5 368.3 900.0 370.0C902.5 371.7 905.2 374.3 907.5 375.8C909.8 377.2 911.7 378.7 913.8 378.8C915.8 378.8 917.7 377.5 920.0 376.2C922.3 375.0 925.0 372.0 927.5 371.2C930.0 370.5 932.5 372.1 935.0 371.8C937.5 371.4 940.0 370.2 942.5 369.2C945.0 368.3 947.5 366.9 950.0 366.2C952.5 365.6 954.8 366.1 957.5 365.5C960.2 364.9 963.8 362.5 966.2 362.5C968.8 362.5 970.4 364.5 972.5 365.5C974.6 366.5 976.7 368.8 978.8 368.8C980.8 368.8 982.7 366.8 985.0 365.5C987.3 364.2 990.0 362.0 992.5 360.8C995.0 359.5 997.1 358.0 1000.0 358.0C1002.9 358.0 1007.3 360.2 1010.0 360.5C1012.7 360.8 1014.2 359.6 1016.2 360.0C1018.3 360.4 1020.2 361.5 1022.5 363.0C1024.8 364.5 1027.5 367.0 1030.0 368.8C1032.5 370.5 1035.2 372.4 1037.5 373.8C1039.8 375.1 1041.7 376.7 1043.8 376.8C1045.8 376.8 1047.9 375.4 1050.0 374.2C1052.1 373.1 1054.2 371.2 1056.2 370.0C1058.3 368.8 1060.6 368.0 1062.5 367.0C1064.4 366.0 1065.8 363.6 1067.5 363.8C1069.2 363.9 1070.4 366.0 1072.5 368.0C1074.6 370.0 1077.9 375.2 1080.0 375.5C1082.1 375.8 1083.5 371.4 1085.0 370.0C1086.5 368.6 1087.5 366.4 1088.8 367.0C1090.0 367.6 1091.0 371.6 1092.5 373.8C1094.0 375.9 1095.6 379.5 1097.5 380.0C1099.4 380.5 1101.5 376.8 1103.8 376.8C1106.0 376.7 1108.8 379.7 1111.2 379.5C1113.8 379.3 1116.5 375.2 1118.8 375.5C1121.0 375.8 1123.1 378.4 1125.0 381.2C1126.9 384.1 1128.0 389.2 1130.0 392.5C1132.0 395.8 1134.7 402.5 1137.0 401.2C1139.3 400.0 1141.8 389.4 1143.8 385.0C1145.7 380.6 1146.9 377.0 1148.8 375.0C1150.6 373.0 1152.9 375.5 1155.0 373.2C1157.1 371.0 1159.2 364.3 1161.2 361.2C1163.3 358.2 1165.4 354.6 1167.5 355.0C1169.6 355.4 1171.7 359.9 1173.8 363.8C1175.8 367.6 1177.8 376.7 1180.0 378.0C1182.2 379.3 1184.7 372.2 1187.0 371.8C1189.3 371.2 1191.4 372.2 1193.8 375.0C1196.1 377.8 1199.0 383.8 1201.2 388.8C1203.5 393.7 1205.2 404.9 1207.5 404.5C1209.8 404.1 1212.7 391.3 1215.0 386.2C1217.3 381.2 1219.4 374.2 1221.2 374.2C1223.1 374.2 1224.4 379.5 1226.2 386.2C1228.1 393.0 1230.6 406.9 1232.5 415.0C1234.4 423.1 1235.8 434.8 1237.5 435.0C1239.2 435.2 1240.6 421.5 1242.5 416.2C1244.4 411.0 1246.5 404.2 1248.8 403.2C1251.0 402.3 1253.5 410.9 1256.2 410.8C1259.0 410.6 1262.5 402.8 1265.0 402.5C1267.5 402.2 1269.2 407.1 1271.2 408.8C1273.3 410.4 1275.6 413.5 1277.5 412.5C1279.4 411.5 1280.8 405.5 1282.5 402.5C1284.2 399.5 1285.8 393.6 1287.5 394.2C1289.2 394.9 1291.0 399.9 1292.5 406.2C1294.0 412.6 1294.9 425.4 1296.2 432.5C1297.6 439.6 1298.8 449.2 1300.5 448.8C1302.2 448.3 1304.3 434.6 1306.2 430.0C1308.2 425.4 1310.1 419.6 1312.0 421.2C1313.9 422.9 1315.8 433.8 1317.5 440.0C1319.2 446.2 1320.8 458.8 1322.5 458.8C1324.2 458.8 1326.0 447.1 1327.5 440.0C1329.0 432.9 1329.8 422.4 1331.2 416.2C1332.7 410.1 1334.6 403.6 1336.2 403.0C1337.9 402.4 1339.6 408.5 1341.2 412.5C1342.9 416.5 1344.6 426.3 1346.2 426.8C1347.9 427.2 1349.4 419.0 1351.2 415.0C1353.1 411.0 1355.4 402.3 1357.5 402.5C1359.6 402.7 1361.7 412.2 1363.8 416.2C1365.8 420.3 1367.7 426.6 1370.0 426.8C1372.3 426.9 1375.2 417.5 1377.5 417.0C1379.8 416.5 1381.7 421.9 1383.8 423.8C1385.8 425.6 1387.5 428.3 1390.0 428.0C1392.5 427.7 1396.5 422.0 1398.8 421.8C1401.0 421.5 1401.7 425.8 1403.8 426.2C1405.8 426.7 1408.8 426.1 1411.2 424.2C1413.8 422.4 1416.5 416.0 1418.8 415.0C1421.0 414.0 1422.3 419.0 1425.0 418.0C1427.7 417.0 1432.3 409.0 1435.0 408.8C1437.7 408.5 1439.2 413.3 1441.2 416.2C1443.3 419.2 1445.2 425.3 1447.5 426.2C1449.8 427.2 1453.1 422.4 1455.0 421.8C1456.9 421.1 1457.3 422.9 1458.8 422.5C1460.2 422.1 1461.9 419.2 1463.8 419.2C1465.6 419.3 1467.9 421.2 1470.0 423.0C1472.1 424.8 1474.2 427.8 1476.2 430.0C1478.3 432.2 1480.0 434.0 1482.5 436.2C1485.0 438.5 1488.8 442.6 1491.2 443.2C1493.8 443.9 1496.0 440.4 1497.5 440.0C1499.0 439.6 1497.6 439.1 1500.0 440.7C1502.4 442.3 1508.1 444.4 1511.8 449.6C1515.5 454.8 1519.2 463.7 1522.2 471.8C1525.2 479.9 1527.4 486.1 1529.6 498.5C1531.8 510.8 1533.8 533.5 1535.5 545.8C1537.3 558.2 1538.7 567.3 1540.0 572.5C1541.2 577.7 1541.7 577.9 1542.9 576.9C1544.2 575.9 1545.7 573.7 1547.4 566.6C1549.1 559.4 1551.3 543.9 1553.3 534.0C1555.3 524.1 1556.8 514.7 1559.2 507.3C1561.7 499.9 1565.1 493.6 1568.1 489.6C1571.1 485.5 1574.0 483.1 1577.0 483.1C1580.0 483.1 1583.2 485.5 1585.9 489.6C1588.6 493.6 1591.1 500.9 1593.3 507.3C1595.5 513.8 1597.6 524.0 1599.2 528.1C1600.8 532.1 1601.6 533.1 1603.1 531.6C1604.5 530.1 1606.0 526.2 1608.1 519.2C1610.2 512.2 1612.8 500.4 1615.5 489.6C1618.2 478.7 1621.4 464.6 1624.4 454.0C1627.3 443.4 1630.3 433.5 1633.3 425.9C1636.2 418.2 1639.7 411.6 1642.1 408.1C1644.6 404.7 1646.1 404.2 1648.1 405.2C1650.0 406.2 1651.8 407.4 1654.0 414.1C1656.2 420.7 1658.7 431.1 1661.4 445.1C1664.1 459.2 1667.6 480.7 1670.3 498.5C1673.0 516.2 1675.5 536.0 1677.7 551.8C1679.9 567.5 1681.9 583.3 1683.6 593.2C1685.3 603.1 1686.1 607.7 1688.0 611.0C1690.0 614.3 1693.0 612.6 1695.4 613.1C1697.9 613.5 1700.4 615.3 1702.8 613.9C1705.3 612.6 1707.8 609.0 1710.3 605.1C1712.7 601.1 1715.7 593.1 1717.7 590.3C1719.6 587.4 1720.4 586.9 1722.1 587.9C1723.8 588.9 1725.6 589.4 1728.0 596.2C1730.5 603.0 1734.2 616.4 1736.9 628.7C1739.6 641.1 1742.3 658.4 1744.3 670.2C1746.3 682.1 1747.6 686.3 1748.7 699.8C1749.9 713.3 1750.7 742.5 1751.1 751.1" stroke="#0080ff" stroke-width="2.3" fill="none" stroke-linejoin="round" stroke-linecap="round"/><path d="M240 250.5H1750M592.5 234V1002" stroke="#000" stroke-width="1.2" fill="none"/><path d="M365.0 312.0L506.4 352.3" stroke="#3505fa" stroke-width="1.9" fill="none"/><path d="M517.5 355.5L505.6 355.3L507.3 349.4Z" fill="#3505fa"/><path d="M352.0 687.5L416.1 591.1" stroke="#3505fa" stroke-width="1.9" fill="none"/><path d="M422.5 581.5L418.7 592.8L413.6 589.4Z" fill="#3505fa"/><path d="M889.5 844.0L827.4 880.2" stroke="#3505fa" stroke-width="1.9" fill="none"/><path d="M817.5 886.0L825.9 877.5L829.0 882.9Z" fill="#3505fa"/></svg>
<span class="t" style="left:225.3px;top:960.5px;font-size:12px;line-height:16px;color:#1a1a1a;transform:scaleX(0.877);">50</span>
<span class="t" style="left:225.3px;top:901.3px;font-size:12px;line-height:16px;color:#1a1a1a;transform:scaleX(0.877);">55</span>
<span class="t" style="left:225.3px;top:842.1px;font-size:12px;line-height:16px;color:#1a1a1a;transform:scaleX(0.877);">60</span>
<span class="t" style="left:225.3px;top:782.9px;font-size:12px;line-height:16px;color:#1a1a1a;transform:scaleX(0.877);">65</span>
<span class="t" style="left:225.3px;top:723.7px;font-size:12px;line-height:16px;color:#1a1a1a;transform:scaleX(0.877);">70</span>
<span class="t" style="left:225.3px;top:664.5px;font-size:12px;line-height:16px;color:#1a1a1a;transform:scaleX(0.877);">75</span>
<span class="t" style="left:225.3px;top:605.3px;font-size:12px;line-height:16px;color:#1a1a1a;transform:scaleX(0.877);">80</span>
<span class="t" style="left:225.3px;top:546.1px;font-size:12px;line-height:16px;color:#1a1a1a;transform:scaleX(0.877);">85</span>
<span class="t" style="left:225.3px;top:486.9px;font-size:12px;line-height:16px;color:#1a1a1a;transform:scaleX(0.877);">90</span>
<span class="t" style="left:225.3px;top:427.7px;font-size:12px;line-height:16px;color:#1a1a1a;transform:scaleX(0.877);">95</span>
<span class="t" style="left:219.4px;top:368.5px;font-size:12px;line-height:16px;color:#1a1a1a;transform:scaleX(0.877);">100</span>
<span class="t" style="left:219.4px;top:309.3px;font-size:12px;line-height:16px;color:#1a1a1a;transform:scaleX(0.877);">105</span>
<span class="t" style="left:219.5px;top:250.1px;font-size:12px;line-height:16px;color:#1a1a1a;transform:scaleX(0.915);">110</span>
<div class="a" style="left:199px;top:242px;width:40px;height:18px;background:#fff;border:1px solid #0000e0;box-sizing:border-box;"></div>
<span class="t" style="left:202.5px;top:243.5px;font-size:12px;line-height:16px;color:#0000e0;transform:scaleX(0.922);">110,62</span>
<span class="t" style="left:218.0px;top:216.0px;font-size:12px;line-height:16px;color:#1a1a1a;transform:scaleX(0.794);">SPL</span>
<span class="t" style="left:425.9px;top:1006.5px;font-size:12px;line-height:16px;color:#1a1a1a;transform:scaleX(0.884);">20</span>
<span class="t" style="left:537.2px;top:1006.5px;font-size:12px;line-height:16px;color:#1a1a1a;transform:scaleX(0.884);">30</span>
<span class="t" style="left:616.2px;top:1006.5px;font-size:12px;line-height:16px;color:#1a1a1a;transform:scaleX(0.884);">40</span>
<span class="t" style="left:677.4px;top:1006.5px;font-size:12px;line-height:16px;color:#1a1a1a;transform:scaleX(0.884);">50</span>
<span class="t" style="left:727.5px;top:1006.5px;font-size:12px;line-height:16px;color:#1a1a1a;transform:scaleX(0.884);">60</span>
<span class="t" style="left:769.8px;top:1006.5px;font-size:12px;line-height:16px;color:#1a1a1a;transform:scaleX(0.884);">70</span>
<span class="t" style="left:806.4px;top:1006.5px;font-size:12px;line-height:16px;color:#1a1a1a;transform:scaleX(0.884);">80</span>
<span class="t" style="left:838.8px;top:1006.5px;font-size:12px;line-height:16px;color:#1a1a1a;transform:scaleX(0.884);">90</span>
<span class="t" style="left:864.7px;top:1006.5px;font-size:12px;line-height:16px;color:#1a1a1a;transform:scaleX(0.884);">100</span>
<span class="t" style="left:1055.0px;top:1006.5px;font-size:12px;line-height:16px;color:#1a1a1a;transform:scaleX(0.884);">200</span>
<span class="t" style="left:1166.3px;top:1006.5px;font-size:12px;line-height:16px;color:#1a1a1a;transform:scaleX(0.884);">300</span>
<span class="t" style="left:1245.3px;top:1006.5px;font-size:12px;line-height:16px;color:#1a1a1a;transform:scaleX(0.884);">400</span>
<span class="t" style="left:1306.5px;top:1006.5px;font-size:12px;line-height:16px;color:#1a1a1a;transform:scaleX(0.884);">500</span>
<span class="t" style="left:1356.6px;top:1006.5px;font-size:12px;line-height:16px;color:#1a1a1a;transform:scaleX(0.884);">600</span>
<span class="t" style="left:1398.9px;top:1006.5px;font-size:12px;line-height:16px;color:#1a1a1a;transform:scaleX(0.884);">700</span>
<span class="t" style="left:1435.5px;top:1006.5px;font-size:12px;line-height:16px;color:#1a1a1a;transform:scaleX(0.884);">800</span>
<span class="t" style="left:1467.9px;top:1006.5px;font-size:12px;line-height:16px;color:#1a1a1a;transform:scaleX(0.884);">900</span>
<span class="t" style="left:1495.6px;top:1006.5px;font-size:12px;line-height:16px;color:#1a1a1a;transform:scaleX(0.882);">1,0k</span>
<span class="t" style="left:1685.9px;top:1006.5px;font-size:12px;line-height:16px;color:#1a1a1a;transform:scaleX(0.882);">2,0k</span>
<span class="t" style="left:236.0px;top:1006.5px;font-size:12px;line-height:16px;color:#1a1a1a;transform:scaleX(0.884);">10</span>
<span class="t" style="left:1545.7px;top:1006.5px;font-size:12px;line-height:16px;color:#9a9a9a;transform:scaleX(0.882);">1,2k</span>
<span class="t" style="left:1588.0px;top:1006.5px;font-size:12px;line-height:16px;color:#9a9a9a;transform:scaleX(0.882);">1,4k</span>
<span class="t" style="left:1624.6px;top:1006.5px;font-size:12px;line-height:16px;color:#9a9a9a;transform:scaleX(0.882);">1,6k</span>
<span class="t" style="left:1657.0px;top:1006.5px;font-size:12px;line-height:16px;color:#9a9a9a;transform:scaleX(0.882);">1,8k</span>
<span class="t" style="left:1736.0px;top:1006.5px;font-size:12px;line-height:16px;color:#9a9a9a;transform:scaleX(0.863);">2,4</span>
<div class="a" style="left:579px;top:1005px;width:26px;height:17px;background:#fff;border:1px solid #0000e0;box-sizing:border-box;"></div>
<span class="t" style="left:581.5px;top:1006.5px;font-size:12px;line-height:16px;color:#0000e0;transform:scaleX(0.899);">35,9</span>
<div class="a" style="left:1430px;top:1008px;width:320px;height:15px;overflow:hidden;"><span class="t" style="left:8.0px;top:2.0px;font-size:20.5px;line-height:27px;color:rgba(105,105,105,0.36);transform:scaleX(0.953);">Активация Windows</span></div>
<div class="a" style="left:241px;top:980px;width:126px;height:22px;background:#ececec;border:1px solid #cfcfcf;box-sizing:border-box;border-radius:3px;"></div>
<span class="t" style="left:245.0px;top:983.0px;font-size:12px;line-height:16px;color:#111;transform:scaleX(0.958);">Average the responses</span>
<span class="t" style="left:256.4px;top:274.7px;font-size:23px;line-height:30px;color:#0c3cf8;transform:scaleX(0.812);font-style:italic;">ФИ</span>
<span class="t" style="left:296.5px;top:274.7px;font-size:23px;line-height:30px;color:#0c3cf8;transform:scaleX(0.955);font-style:italic;">диаметр</span>
<span class="t" style="left:397.3px;top:274.7px;font-size:23px;line-height:30px;color:#0c3cf8;transform:scaleX(0.718);font-style:italic;">-</span>
<span class="t" style="left:405.0px;top:274.7px;font-size:23px;line-height:30px;color:#0c3cf8;transform:scaleX(0.782);font-style:italic;">10</span>
<span class="t" style="left:432.8px;top:274.7px;font-size:23px;line-height:30px;color:#0c3cf8;transform:scaleX(0.851);font-style:italic;">см</span>
<span class="t" style="left:476.0px;top:274.7px;font-size:23px;line-height:30px;color:#0c3cf8;transform:scaleX(0.928);font-style:italic;">длина</span>
<span class="t" style="left:542.6px;top:274.7px;font-size:23px;line-height:30px;color:#0c3cf8;transform:scaleX(0.705);font-style:italic;">-</span>
<span class="t" style="left:549.9px;top:274.7px;font-size:23px;line-height:30px;color:#0c3cf8;transform:scaleX(0.790);font-style:italic;">5</span>
<span class="t" style="left:566.3px;top:274.7px;font-size:23px;line-height:30px;color:#0c3cf8;transform:scaleX(0.902);font-style:italic;">см</span>
<span class="t" style="left:268.7px;top:691.0px;font-size:22px;line-height:29px;color:#0c3cf8;transform:scaleX(1.018);font-style:italic;">Динамики</span>
<span class="t" style="left:383.8px;top:691.0px;font-size:22px;line-height:29px;color:#0c3cf8;font-style:italic;">параллельно</span>
<span class="t" style="left:888.6px;top:828.7px;font-size:22px;line-height:29px;color:#0c3cf8;transform:scaleX(0.966);font-style:italic;">Два</span>
<span class="t" style="left:933.0px;top:828.7px;font-size:22px;line-height:29px;color:#0c3cf8;transform:scaleX(1.006);font-style:italic;">динамика</span>
<span class="t" style="left:1043.5px;top:828.7px;font-size:22px;line-height:29px;color:#0c3cf8;transform:scaleX(0.914);font-style:italic;">в</span>
<span class="t" style="left:1064.4px;top:828.7px;font-size:22px;line-height:29px;color:#0c3cf8;transform:scaleX(0.990);font-style:italic;">параллель</span>
<svg class="a" style="left:0;top:0;" width="1750" height="400" viewBox="0 0 1750 400"><defs><linearGradient id="bg1" x1="0" y1="0" x2="0" y2="1"><stop offset="0" stop-color="#ececec"/><stop offset="0.3" stop-color="#ffffff"/><stop offset="0.6" stop-color="#f2f2f2"/><stop offset="1" stop-color="#c8c8c8"/></linearGradient><linearGradient id="fold" x1="0" y1="0" x2="0" y2="1"><stop offset="0" stop-color="#2f9df4"/><stop offset="1" stop-color="#7cc8ff"/></linearGradient><linearGradient id="fold2" x1="0" y1="0" x2="0" y2="1"><stop offset="0" stop-color="#1b84e0"/><stop offset="1" stop-color="#2b95ee"/></linearGradient><radialGradient id="redb" cx="0.4" cy="0.3" r="0.8"><stop offset="0" stop-color="#ff5a4a"/><stop offset="1" stop-color="#d00000"/></radialGradient><radialGradient id="infob" cx="0.4" cy="0.25" r="0.9"><stop offset="0" stop-color="#3aa0ff"/><stop offset="1" stop-color="#0058c8"/></radialGradient><linearGradient id="cam" x1="0" y1="0" x2="0" y2="1"><stop offset="0" stop-color="#fafafa"/><stop offset="1" stop-color="#b9b9b9"/></linearGradient><linearGradient id="lev" x1="0" y1="0" x2="0" y2="1"><stop offset="0" stop-color="#ff0000"/><stop offset="0.45" stop-color="#e03010"/><stop offset="0.7" stop-color="#30a020"/><stop offset="1" stop-color="#00a000"/></linearGradient></defs><path d="M62.500 135.500V107.500H79L83 103.500H93.500V135.500Z" fill="#fbfbfb" stroke="#7d7d7d" stroke-width="1.200"/><rect x="64.500" y="109.500" width="14" height="11" fill="#fff" stroke="#c4c4c4"/><path d="M65 114c1.200-5.500 2.800-5.500 4 0s2.800 5.500 4 0" stroke="#f00" stroke-width="1.300" fill="none"/><rect x="64.500" y="122.500" width="27" height="10.500" fill="#fff" stroke="#c4c4c4"/><path d="M67 125h3M71 125h2M67 128h4M72 128h3M76 128h1.500M67 131h3M71 131h6M78 131h3" stroke="#555" stroke-width="0.900"/><circle cx="90" cy="106.300" r="1.700" fill="#fff" stroke="#e84040" stroke-width="0.800"/><rect x="89" y="109.500" width="2.800" height="2.800" fill="#e8b000" stroke="#222" stroke-width="0.600"/><path d="M88.800 115.500h3" stroke="#e02020" stroke-width="1.200"/><path d="M89 118.500h2.500M89 120.500h2" stroke="#444" stroke-width="0.900"/><path d="M81 119.500h4" stroke="#555" stroke-width="0.900"/><circle cx="82.6" cy="111.4" r="2.900" fill="#ffe600"/><circle cx="80.7" cy="114.2" r="2.900" fill="#ffe600"/><circle cx="77.4" cy="114.8" r="2.900" fill="#ffe600"/><circle cx="74.6" cy="112.9" r="2.900" fill="#ffe600"/><circle cx="74.0" cy="109.6" r="2.900" fill="#ffe600"/><circle cx="75.9" cy="106.8" r="2.900" fill="#ffe600"/><circle cx="79.2" cy="106.2" r="2.900" fill="#ffe600"/><circle cx="82.0" cy="108.1" r="2.900" fill="#ffe600"/><circle cx="78.300" cy="110.500" r="4.600" fill="#ffee00"/><circle cx="78.300" cy="110.500" r="2.500" fill="#fff200"/><path d="M121 109.500q0-2 2-2h8.500l2.500 2.500h13.500q2 0 2 2v6h-28.500z" fill="url(#fold2)"/><path d="M119.500 117.500q0-1.500 1.500-1.500h28.500q1.500 0 1.500 1.500l-1 13.500q-0.200 2-2 2h-25.500q-1.800 0-2-2z" fill="url(#fold)"/><path d="M120 118h30.500" stroke="#bfe2ff" stroke-width="1" opacity="0.700"/><path d="M172.5 135V108.5H189L193 103.5H203.5V135" fill="#e9e9e9" stroke="#8a8a8a"/><rect x="174.5" y="110.5" width="14" height="10" fill="#ddd" stroke="#bbb"/><path d="M175 116c1.500-6 3-6 4.500 0s3 6 4.500 0" stroke="#f00" stroke-width="1.300" fill="none"/><path d="M172.5 121.5H203.5" stroke="#9a9a9a"/><rect x="174.5" y="124.5" width="14" height="10" fill="#fff" stroke="#bbb"/><path d="M175 130c1.500-6 3-6 4.500 0s3 6 4.500 0" stroke="#0a9a10" stroke-width="1.300" fill="none"/><circle cx="200" cy="106.5" r="1.6" fill="#fff" stroke="#e04040" stroke-width="0.8"/><rect x="199" y="110" width="3" height="3" fill="#e8b000" stroke="#333" stroke-width="0.5"/><circle cx="200" cy="120.5" r="1.6" fill="#fff" stroke="#e04040" stroke-width="0.8"/><rect x="199" y="124" width="3" height="3" fill="#e8b000" stroke="#333" stroke-width="0.5"/><path d="M192 112h5M192 116h5M192 126h5M192 130h5" stroke="#777" stroke-width="1"/><path d="M182 114h19l1 1v19h-20z" fill="#2a2a2e"/><rect x="185.500" y="114.500" width="13" height="10" fill="#eaf3fb" stroke="#9ab"/><path d="M187 117h10M187 119.500h10M187 122h10" stroke="#7ab0dd" stroke-width="0.800"/><rect x="186" y="127" width="11" height="7" fill="#bdbdbd"/><rect x="188" y="128" width="3" height="5" fill="#2a2a2e"/><path d="M239.5 135V108.5H256L260 103.5H270.5V135" fill="#e9e9e9" stroke="#8a8a8a"/><rect x="241.5" y="110.5" width="14" height="10" fill="#ddd" stroke="#bbb"/><path d="M242 116c1.500-6 3-6 4.500 0s3 6 4.500 0" stroke="#f00" stroke-width="1.300" fill="none"/><path d="M239.5 121.5H270.5" stroke="#9a9a9a"/><rect x="241.5" y="124.5" width="14" height="10" fill="#fff" stroke="#bbb"/><path d="M242 130c1.500-6 3-6 4.500 0s3 6 4.500 0" stroke="#0a9a10" stroke-width="1.300" fill="none"/><circle cx="267" cy="106.5" r="1.6" fill="#fff" stroke="#e04040" stroke-width="0.8"/><rect x="266" y="110" width="3" height="3" fill="#e8b000" stroke="#333" stroke-width="0.5"/><circle cx="267" cy="120.5" r="1.6" fill="#fff" stroke="#e04040" stroke-width="0.8"/><rect x="266" y="124" width="3" height="3" fill="#e8b000" stroke="#333" stroke-width="0.5"/><path d="M259 112h5M259 116h5M259 126h5M259 130h5" stroke="#777" stroke-width="1"/><path d="M251 112l17 17M268 112l-17 17" stroke="#e00000" stroke-width="4" stroke-linecap="butt"/><circle cx="310" cy="119.500" r="14" fill="url(#infob)"/><ellipse cx="310" cy="112" rx="10.500" ry="6" fill="#fff" opacity="0.180"/><circle cx="310" cy="112" r="2.300" fill="#fff"/><path d="M306.500 116.500h5.500v9h2v2.500h-8v-2.500h2v-6.500h-1.500z" fill="#fff"/><rect x="861.5" y="103.5" width="31" height="31" rx="4" fill="url(#bg1)" stroke="#bdbdbd"/><path d="M865.500 124v-17c8 0 17 6 24 17" stroke="#1a1ad0" stroke-width="1.400" fill="none"/><path d="M865 124h3l1.500-14l2.500 22l2.500-20l2.500 16l2.500-11l2 7l2.500-4l2 2h3" stroke="#f00" stroke-width="1.300" fill="none"/><rect x="927.5" y="103.5" width="31" height="31" rx="4" fill="url(#bg1)" stroke="#bdbdbd"/><rect x="998.5" y="103.5" width="31" height="31" rx="4" fill="url(#bg1)" stroke="#bdbdbd"/><path d="M1002 119C1004 129 1006 132 1008.500 129C1010 126 1011 122 1012 119C1014 110 1016 105 1018.500 107C1021 109 1022 114 1023 119z" fill="#c9c9f4" opacity="0.900"/><path d="M1001.500 113C1003 127 1006 133 1008.500 129C1012 122 1015 104 1018.500 107C1021 109 1022 114 1023.500 118" stroke="#1010d0" stroke-width="2.200" fill="none"/><rect x="1058.5" y="103.5" width="31" height="31" rx="4" fill="url(#bg1)" stroke="#bdbdbd"/><rect x="1060" y="105" width="28" height="28" rx="3" fill="#141414"/><path d="M1062 119h24M1074 107v24" stroke="#888" stroke-width="0.800"/><path d="M1062.500 119c3-12 7-12 11 0s8 12 11.500 0" stroke="#e8e8e8" stroke-width="1.600" fill="none"/><rect x="1108.5" y="103.5" width="31" height="31" rx="4" fill="url(#bg1)" stroke="#bdbdbd"/><rect x="1112" y="106" width="6" height="27" fill="url(#lev)" stroke="#4a4ae0" stroke-width="0.600"/><rect x="1129" y="106" width="6" height="27" fill="url(#lev)" stroke="#4a4ae0" stroke-width="0.600"/><rect x="1164.5" y="103.5" width="31" height="31" rx="4" fill="url(#bg1)" stroke="#bdbdbd"/><path d="M1167 111c3-6 6-6 9 0s7 5 9 2s4-1 6-2" stroke="#f00" stroke-width="1.400" fill="none"/><path d="M1167 119c3-6 6-6 9 0s7 5 9 2s4-1 6-2" stroke="#1515e0" stroke-width="1.400" fill="none"/><path d="M1167 128c3-6 6-6 9 0s7 5 9 2s4-1 6-2" stroke="#0a9a10" stroke-width="1.400" fill="none"/><rect x="1221.5" y="103.5" width="31" height="31" rx="4" fill="url(#bg1)" stroke="#bdbdbd"/><rect x="1227.0" y="115.2" width="2.100" height="14.7" fill="#0000c8"/><rect x="1230.2" y="109.1" width="2.100" height="20.8" fill="#0000c8"/><rect x="1233.4" y="108.1" width="2.100" height="21.8" fill="#0000c8"/><rect x="1236.5" y="112.0" width="2.100" height="17.9" fill="#0000c8"/><rect x="1239.6" y="118.0" width="2.100" height="11.9" fill="#0000c8"/><rect x="1242.6" y="122.0" width="2.100" height="7.9" fill="#0000c8"/><rect x="1245.7" y="121.0" width="2.100" height="8.9" fill="#0000c8"/><rect x="1271.5" y="103.5" width="31" height="31" rx="4" fill="url(#bg1)" stroke="#bdbdbd"/><circle cx="1292" cy="119.200" r="5.800" fill="#00b0b0" stroke="#0000b4" stroke-width="2.600"/><path d="M1295 123l3.500 3" stroke="#00b0b0" stroke-width="2.600" stroke-linecap="round"/><rect x="1324.5" y="103.5" width="31" height="31" rx="4" fill="url(#bg1)" stroke="#bdbdbd"/><rect x="1329.3" y="110.0" width="1.800" height="18.4" fill="#ff0000"/><rect x="1332.2" y="116.1" width="1.800" height="12.3" fill="#ff00d0"/><rect x="1335.1" y="112.0" width="1.800" height="16.4" fill="#108010"/><rect x="1337.2" y="116.1" width="1.800" height="12.3" fill="#d08000"/><rect x="1341.2" y="114.0" width="1.800" height="14.4" fill="#0000d0"/><rect x="1344.3" y="110.0" width="1.800" height="18.4" fill="#ff0000"/><rect x="1347.1" y="116.1" width="1.800" height="12.3" fill="#d08000"/><rect x="1349.2" y="116.1" width="1.800" height="12.3" fill="#ff00d0"/><path d="M1329 128.500h22" stroke="#222" stroke-width="1"/><rect x="213" y="169" width="6" height="3" fill="#ddd" stroke="#aaa" stroke-width="0.600"/><rect x="208.500" y="171.500" width="29" height="18" rx="1.500" fill="url(#cam)" stroke="#a9a9a9"/><circle cx="227.500" cy="180.500" r="6.500" fill="#c4c4c4" stroke="#9a9a9a"/><circle cx="227.500" cy="180.500" r="4.200" fill="#8a8a8a"/><circle cx="227.500" cy="180.500" r="2.200" fill="#2a2a3a"/><circle cx="226.500" cy="179.500" r="0.900" fill="#dde"/><rect x="1632.500" y="165.500" width="35" height="26" fill="#fff" stroke="#d0d0d0"/><path d="M1634 182c5-8 9-6 14-1s10 3 18-2" stroke="#0a9a10" stroke-width="1.200" fill="none"/><path d="M1634 179c5-8 9-6 14-1s10 3 18-2" stroke="#1515e0" stroke-width="1" fill="none"/><path d="M1640 178c4 2 10 2 14-1" stroke="#f00" stroke-width="1.200" fill="none"/><path d="M1649 178v9M1645 184l4 4l4-4" stroke="#000" stroke-width="1.800" fill="none"/></svg>
<span class="t" style="left:929.5px;top:105.5px;font-size:7.5px;line-height:10px;color:#222;transform:scaleX(1.062);">dB SPL</span>
<span class="t" style="left:934.0px;top:113.0px;font-size:16px;line-height:21px;color:#000;transform:scaleX(1.012);font-weight:bold;">83</span>
<span class="t" style="left:1274.3px;top:105.2px;font-size:21.5px;line-height:28px;color:#0000b4;transform:scaleX(0.662);font-weight:bold;-webkit-text-stroke:0.5px #0000b4;">E</span>
<span class="t" style="left:1121.7px;top:105.5px;font-size:6.5px;line-height:8px;color:#444;">0</span>
<span class="t" style="left:1121.7px;top:111.9px;font-size:6.5px;line-height:8px;color:#444;">3</span>
<span class="t" style="left:1121.7px;top:118.3px;font-size:6.5px;line-height:8px;color:#444;">6</span>
<span class="t" style="left:1121.7px;top:124.7px;font-size:6.5px;line-height:8px;color:#444;">9</span>
<span class="t" style="left:56.0px;top:139.0px;font-size:12px;line-height:16px;color:#10101c;transform:scaleX(0.964);">Measure</span>
<span class="t" style="left:121.0px;top:139.0px;font-size:12px;line-height:16px;color:#10101c;transform:scaleX(0.988);">Open</span>
<span class="t" style="left:169.0px;top:139.0px;font-size:12px;line-height:16px;color:#10101c;transform:scaleX(0.914);">Save all</span>
<span class="t" style="left:226.0px;top:139.0px;font-size:12px;line-height:16px;color:#10101c;transform:scaleX(0.966);">Remove all</span>
<span class="t" style="left:300.0px;top:139.0px;font-size:12px;line-height:16px;color:#10101c;transform:scaleX(1.049);">Info</span>
<span class="t" style="left:847.0px;top:139.0px;font-size:12px;line-height:16px;color:#10101c;transform:scaleX(0.978);">IR windows</span>
<span class="t" style="left:917.0px;top:139.0px;font-size:12px;line-height:16px;color:#10101c;transform:scaleX(0.942);">SPL meter</span>
<span class="t" style="left:988.0px;top:139.0px;font-size:12px;line-height:16px;color:#10101c;transform:scaleX(0.963);">Generator</span>
<span class="t" style="left:1058.0px;top:139.0px;font-size:12px;line-height:16px;color:#10101c;transform:scaleX(0.941);">Scope</span>
<span class="t" style="left:1108.0px;top:139.0px;font-size:12px;line-height:16px;color:#10101c;transform:scaleX(0.923);">Levels</span>
<span class="t" style="left:1158.0px;top:139.0px;font-size:12px;line-height:16px;color:#10101c;transform:scaleX(0.951);">Overlays</span>
<span class="t" style="left:202.0px;top:195.0px;font-size:12px;line-height:16px;color:#10101c;transform:scaleX(0.984);">Capture</span>
<span class="t" style="left:1627.0px;top:197.0px;font-size:12px;line-height:16px;color:#10101c;transform:scaleX(0.924);">Separate</span>
<span class="t" style="left:1702.0px;top:197.0px;font-size:12px;line-height:16px;color:#10101c;transform:scaleX(0.966);">Scroll</span>
<div class="a" style="left:1717px;top:169px;width:14px;height:17px;background:#fff;border:1px solid #d5d5d5;box-sizing:border-box;"></div>
<div class="a" style="left:48px;top:163px;width:68px;height:25px;background:linear-gradient(#efefef,#dfdfdf);border:1px solid #cfcfcf;box-sizing:border-box;border-radius:4px;"></div>
<span class="t" style="left:50.0px;top:167.5px;font-size:12px;line-height:16px;color:#10101c;transform:scaleX(0.958);">Expand</span>
<svg class="a" style="left:98px;top:170px;" width="14" height="12" viewBox="0 0 14 12"><path d="M1.500 1.500l4 4.500l-4 4.500M7.500 1.500l4 4.500l-4 4.500" stroke="#333" stroke-width="1.300" fill="none"/></svg>
<div class="a" style="left:484px;top:179px;width:902px;height:23px;background:linear-gradient(#f3f3f3,#e4e4e4 60%,#d9d9d9);border:1px solid #c4c4c4;box-sizing:border-box;border-radius:4px;"></div>
<span class="t" style="left:492.5px;top:182.5px;font-size:12px;line-height:16px;color:#10101c;transform:scaleX(0.981);">Impedance &amp; Phase</span>
<div class="a" style="left:606px;top:179px;width:127px;height:23px;background:linear-gradient(#d9d9d9,#e6e6e6);border:1px solid #8f8f8f;box-sizing:border-box;"></div>
<span class="t" style="left:614.5px;top:182.5px;font-size:12px;line-height:16px;color:#10101c;transform:scaleX(0.974);">All SPL &amp; Impedance</span>
<div class="a" style="left:732px;top:180px;width:1px;height:21px;background:#c9c9c9;"></div>
<span class="t" style="left:740.5px;top:182.5px;font-size:12px;line-height:16px;color:#10101c;transform:scaleX(1.046);">Distortion</span>
<div class="a" style="left:801px;top:180px;width:1px;height:21px;background:#c9c9c9;"></div>
<span class="t" style="left:809.5px;top:182.5px;font-size:12px;line-height:16px;color:#10101c;">Impulse</span>
<div class="a" style="left:859px;top:180px;width:1px;height:21px;background:#c9c9c9;"></div>
<span class="t" style="left:867.5px;top:182.5px;font-size:12px;line-height:16px;color:#10101c;transform:scaleX(0.940);">Filtered IR</span>
<div class="a" style="left:927px;top:180px;width:1px;height:21px;background:#c9c9c9;"></div>
<span class="t" style="left:935.5px;top:182.5px;font-size:12px;line-height:16px;color:#10101c;transform:scaleX(0.889);">GD</span>
<div class="a" style="left:959px;top:180px;width:1px;height:21px;background:#c9c9c9;"></div>
<span class="t" style="left:967.5px;top:182.5px;font-size:12px;line-height:16px;color:#10101c;transform:scaleX(0.858);">RT60</span>
<div class="a" style="left:1000px;top:180px;width:1px;height:21px;background:#c9c9c9;"></div>
<span class="t" style="left:1008.5px;top:182.5px;font-size:12px;line-height:16px;color:#10101c;transform:scaleX(0.903);">RT60 Decay</span>
<div class="a" style="left:1076px;top:180px;width:1px;height:21px;background:#c9c9c9;"></div>
<span class="t" style="left:1084.5px;top:182.5px;font-size:12px;line-height:16px;color:#10101c;">Clarity</span>
<div class="a" style="left:1126px;top:180px;width:1px;height:21px;background:#c9c9c9;"></div>
<span class="t" style="left:1134.5px;top:182.5px;font-size:12px;line-height:16px;color:#10101c;transform:scaleX(0.941);">Decay</span>
<div class="a" style="left:1174px;top:180px;width:1px;height:21px;background:#c9c9c9;"></div>
<span class="t" style="left:1182.5px;top:182.5px;font-size:12px;line-height:16px;color:#10101c;">Waterfall</span>
<div class="a" style="left:1237px;top:180px;width:1px;height:21px;background:#c9c9c9;"></div>
<span class="t" style="left:1245.5px;top:182.5px;font-size:12px;line-height:16px;color:#10101c;transform:scaleX(0.990);">Spectrogram</span>
<div class="a" style="left:1321px;top:180px;width:1px;height:21px;background:#c9c9c9;"></div>
<span class="t" style="left:1329.5px;top:182.5px;font-size:12px;line-height:16px;color:#10101c;transform:scaleX(0.993);">Captured</span>
<svg class="a" style="left:0;top:0;" width="200" height="760" viewBox="0 0 200 760"><path d="M48.500 295V197.5q0-2 2-2H128.500L156 167.5q1-1 2.500-1H188.500q2 0 2 2V295" fill="#e3e3e3" stroke="#cbcbcb"/><rect x="55.500" y="205.5" width="98" height="65" fill="#fff" stroke="#c9c9c9"/><path d="M63.8 205.5V270.5M69.4 205.5V270.5M73.7 205.5V270.5M77.3 205.5V270.5M80.3 205.5V270.5M82.8 205.5V270.5M85.1 205.5V270.5M87.2 205.5V270.5M100.6 205.5V270.5M108.4 205.5V270.5M114.0 205.5V270.5M118.3 205.5V270.5M121.8 205.5V270.5M124.8 205.5V270.5M127.4 205.5V270.5M129.7 205.5V270.5M131.7 205.5V270.5M145.2 205.5V270.5M56 214.8H153M56 224.1H153M56 233.4H153M56 242.7H153M56 252.0H153M56 261.3H153" stroke="#e4e4e4" stroke-width="1" fill="none"/><path d="M56.0 239.1C56.5 238.7 58.1 237.3 59.2 236.8C60.3 236.2 61.5 235.5 62.4 235.6C63.4 235.7 64.3 236.8 65.0 237.5C65.8 238.2 66.3 240.0 67.0 239.7C67.6 239.5 68.3 237.4 68.9 235.9C69.6 234.3 70.0 232.3 70.9 230.7C71.7 229.0 73.0 227.4 74.1 226.1C75.2 224.9 76.3 224.0 77.4 223.3C78.4 222.6 79.5 222.5 80.6 222.0C81.7 221.4 82.7 220.3 83.8 219.9C85.0 219.5 86.7 219.3 87.7 219.4C88.8 219.4 89.4 220.2 90.3 220.3C91.3 220.4 92.6 220.2 93.6 220.0C94.5 219.8 95.3 219.0 96.2 219.0C97.0 219.0 97.9 220.2 98.8 220.3C99.6 220.4 100.3 219.4 101.3 219.6C102.4 219.9 104.2 222.0 105.2 222.0C106.3 222.0 107.0 219.6 107.8 219.6C108.7 219.6 109.7 221.4 110.4 222.0C111.2 222.6 111.6 222.6 112.4 223.3C113.1 224.0 114.2 225.9 115.0 226.1C115.7 226.3 116.3 224.4 116.9 224.6C117.6 224.8 118.1 227.6 118.9 227.4C119.6 227.3 120.6 223.9 121.4 223.5C122.3 223.1 123.2 225.1 124.0 225.1C124.9 225.1 125.7 223.6 126.6 223.5C127.6 223.5 128.9 224.0 129.9 224.8C130.8 225.7 131.7 226.8 132.5 228.7C133.2 230.7 133.9 236.1 134.4 236.5C135.0 236.9 135.2 231.6 135.7 231.3C136.2 231.0 137.0 235.4 137.7 234.6C138.3 233.7 139.0 227.9 139.6 226.1C140.2 224.4 140.7 223.5 141.3 224.2C141.8 224.8 142.4 227.3 142.8 230.0C143.3 232.7 143.7 237.4 144.1 240.4C144.6 243.4 145.0 247.7 145.4 248.2C145.9 248.6 146.3 242.8 146.7 243.0C147.2 243.2 147.8 246.9 148.3 249.5C148.8 252.1 149.2 256.4 149.6 258.5C150.0 260.7 150.2 263.3 150.6 262.4C151.0 261.6 151.5 256.2 151.9 253.4C152.3 250.5 153.0 246.9 153.2 245.6" stroke="#ff0000" stroke-width="1.200" fill="none" stroke-linejoin="round"/><rect x="57" y="257.5" width="14" height="12" fill="#fff" opacity="0.850"/><rect x="131" y="257.5" width="22" height="12" fill="#fff" opacity="0.850"/><rect x="55.500" y="274.5" width="130" height="12" fill="#fff" stroke="#d4d4d4"/><circle cx="173" cy="185" r="7.500" fill="url(#redb)" stroke="#c00000" stroke-width="0.600"/><path d="M169.600 181.6l6.800 6.800M176.400 181.6l-6.800 6.800" stroke="#fff" stroke-width="2.300" stroke-linecap="round"/><path d="M166 204h13l2 2v12h-15z" fill="#2b2b2b"/><rect x="169" y="204" width="8" height="5" fill="#cfcfcf"/><rect x="169" y="212" width="9" height="6" fill="#9a9a9a"/><path d="M165 218L179 203" stroke="#e8b020" stroke-width="2.400"/><path d="M179 203l2-2" stroke="#e03030" stroke-width="2.400"/><path d="M168 238q1-4 4-6l7-8q1 0 1 1l-7 9q-2 3-5 4z" fill="#222"/><path d="M166 241.5h13" stroke="#ff0000" stroke-width="1.800"/><path d="M166.500 252.5h9l4 4v11h-13z" fill="#9a9a9a" stroke="#7d7d7d"/><path d="M168.500 258h8M168.500 260.5h8M168.500 263h8" stroke="#c8c8c8" stroke-width="1"/></svg>
<span class="t" style="left:59.0px;top:206.5px;font-size:12px;line-height:16px;color:#1c1c1c;transform:scaleX(0.779);">1 L</span>
<div class="a" style="left:59px;top:221px;width:6px;height:1px;background:#1c1c1c;"></div>
<span class="t" style="left:58.0px;top:256.0px;font-size:12px;line-height:16px;color:#2a2a2a;transform:scaleX(0.899);">20</span>
<span class="t" style="left:132.0px;top:256.0px;font-size:12px;line-height:16px;color:#2a2a2a;transform:scaleX(0.926);">3,0k</span>
<svg class="a" style="left:0;top:0;" width="200" height="760" viewBox="0 0 200 760"><path d="M48.500 385V287.5q0-2 2-2H128.500L156 257.5q1-1 2.500-1H188.500q2 0 2 2V385" fill="#e3e3e3" stroke="#cbcbcb"/><rect x="55.500" y="295.5" width="98" height="65" fill="#fff" stroke="#c9c9c9"/><path d="M63.8 295.5V360.5M69.4 295.5V360.5M73.7 295.5V360.5M77.3 295.5V360.5M80.3 295.5V360.5M82.8 295.5V360.5M85.1 295.5V360.5M87.2 295.5V360.5M100.6 295.5V360.5M108.4 295.5V360.5M114.0 295.5V360.5M118.3 295.5V360.5M121.8 295.5V360.5M124.8 295.5V360.5M127.4 295.5V360.5M129.7 295.5V360.5M131.7 295.5V360.5M145.2 295.5V360.5M56 304.8H153M56 314.1H153M56 323.4H153M56 332.7H153M56 342.0H153M56 351.3H153" stroke="#e4e4e4" stroke-width="1" fill="none"/><path d="M56.0 329.1C56.5 328.7 58.1 327.3 59.2 326.8C60.3 326.2 61.5 325.5 62.4 325.6C63.4 325.7 64.3 326.8 65.0 327.5C65.8 328.2 66.3 330.0 67.0 329.7C67.6 329.5 68.3 327.4 68.9 325.9C69.6 324.3 70.0 322.3 70.9 320.7C71.7 319.0 73.0 317.4 74.1 316.1C75.2 314.9 76.3 314.0 77.4 313.3C78.4 312.6 79.5 312.5 80.6 312.0C81.7 311.4 82.7 310.3 83.8 309.9C85.0 309.5 86.7 309.3 87.7 309.4C88.8 309.4 89.4 310.2 90.3 310.3C91.3 310.4 92.6 310.2 93.6 310.0C94.5 309.8 95.3 309.0 96.2 309.0C97.0 309.0 97.9 310.2 98.8 310.3C99.6 310.4 100.3 309.4 101.3 309.6C102.4 309.9 104.2 312.0 105.2 312.0C106.3 312.0 107.0 309.6 107.8 309.6C108.7 309.6 109.7 311.4 110.4 312.0C111.2 312.6 111.6 312.6 112.4 313.3C113.1 314.0 114.2 315.9 115.0 316.1C115.7 316.3 116.3 314.4 116.9 314.6C117.6 314.8 118.1 317.6 118.9 317.4C119.6 317.3 120.6 313.9 121.4 313.5C122.3 313.1 123.2 315.1 124.0 315.1C124.9 315.1 125.7 313.6 126.6 313.5C127.6 313.5 128.9 314.0 129.9 314.8C130.8 315.7 131.7 316.8 132.5 318.7C133.2 320.7 133.9 326.1 134.4 326.5C135.0 326.9 135.2 321.6 135.7 321.3C136.2 321.0 137.0 325.4 137.7 324.6C138.3 323.7 139.0 317.9 139.6 316.1C140.2 314.4 140.7 313.5 141.3 314.2C141.8 314.8 142.4 317.3 142.8 320.0C143.3 322.7 143.7 327.4 144.1 330.4C144.6 333.4 145.0 337.7 145.4 338.2C145.9 338.6 146.3 332.8 146.7 333.0C147.2 333.2 147.8 336.9 148.3 339.5C148.8 342.1 149.2 346.4 149.6 348.5C150.0 350.7 150.2 353.3 150.6 352.4C151.0 351.6 151.5 346.2 151.9 343.4C152.3 340.5 153.0 336.9 153.2 335.6" stroke="#0088ff" stroke-width="1.200" fill="none" stroke-linejoin="round"/><rect x="57" y="347.5" width="14" height="12" fill="#fff" opacity="0.850"/><rect x="131" y="347.5" width="22" height="12" fill="#fff" opacity="0.850"/><rect x="55.500" y="364.5" width="130" height="12" fill="#fff" stroke="#d4d4d4"/><circle cx="173" cy="275" r="7.500" fill="url(#redb)" stroke="#c00000" stroke-width="0.600"/><path d="M169.600 271.6l6.800 6.800M176.400 271.6l-6.800 6.800" stroke="#fff" stroke-width="2.300" stroke-linecap="round"/><path d="M166 294h13l2 2v12h-15z" fill="#2b2b2b"/><rect x="169" y="294" width="8" height="5" fill="#cfcfcf"/><rect x="169" y="302" width="9" height="6" fill="#9a9a9a"/><path d="M165 308L179 293" stroke="#e8b020" stroke-width="2.400"/><path d="M179 293l2-2" stroke="#e03030" stroke-width="2.400"/><path d="M168 328q1-4 4-6l7-8q1 0 1 1l-7 9q-2 3-5 4z" fill="#222"/><path d="M166 331.5h13" stroke="#0088ff" stroke-width="1.800"/><path d="M166.500 342.5h9l4 4v11h-13z" fill="#9a9a9a" stroke="#7d7d7d"/><path d="M168.500 348h8M168.500 350.5h8M168.500 353h8" stroke="#c8c8c8" stroke-width="1"/></svg>
<span class="t" style="left:59.0px;top:296.5px;font-size:12px;line-height:16px;color:#1c1c1c;transform:scaleX(0.779);">2 L</span>
<div class="a" style="left:59px;top:311px;width:6px;height:1px;background:#1c1c1c;"></div>
<span class="t" style="left:58.0px;top:346.0px;font-size:12px;line-height:16px;color:#2a2a2a;transform:scaleX(0.899);">20</span>
<span class="t" style="left:132.0px;top:346.0px;font-size:12px;line-height:16px;color:#2a2a2a;transform:scaleX(0.926);">3,0k</span>
<svg class="a" style="left:0;top:0;" width="200" height="760" viewBox="0 0 200 760"><path d="M48.500 475V377.5q0-2 2-2H128.500L156 347.5q1-1 2.500-1H188.500q2 0 2 2V475" fill="#e3e3e3" stroke="#cbcbcb"/><rect x="55.500" y="385.5" width="98" height="65" fill="#fff" stroke="#c9c9c9"/><path d="M63.8 385.5V450.5M69.4 385.5V450.5M73.7 385.5V450.5M77.3 385.5V450.5M80.3 385.5V450.5M82.8 385.5V450.5M85.1 385.5V450.5M87.2 385.5V450.5M100.6 385.5V450.5M108.4 385.5V450.5M114.0 385.5V450.5M118.3 385.5V450.5M121.8 385.5V450.5M124.8 385.5V450.5M127.4 385.5V450.5M129.7 385.5V450.5M131.7 385.5V450.5M145.2 385.5V450.5M56 394.8H153M56 404.1H153M56 413.4H153M56 422.7H153M56 432.0H153M56 441.3H153" stroke="#e4e4e4" stroke-width="1" fill="none"/><path d="M56.0 411.1C56.6 410.2 58.6 407.7 59.9 406.1C61.2 404.5 62.6 402.8 63.7 401.6C64.9 400.4 65.9 399.3 67.0 399.0C68.1 398.7 69.0 399.3 70.2 399.9C71.4 400.6 72.8 401.8 74.1 402.9C75.4 403.9 76.7 405.2 78.0 406.1C79.3 407.1 80.6 407.9 81.9 408.5C83.2 409.0 84.6 409.1 85.8 409.4C87.0 409.6 88.1 410.2 89.0 410.0C89.9 409.8 90.6 408.7 91.2 408.1C91.9 407.5 92.4 406.1 92.9 406.4C93.4 406.7 93.8 408.1 94.2 410.0C94.6 411.9 95.1 415.0 95.5 417.8C95.9 420.6 96.4 423.6 96.8 426.9C97.2 430.1 97.7 436.8 98.1 437.2C98.5 437.7 98.6 431.4 99.0 429.5C99.4 427.5 100.1 427.3 100.7 425.6C101.3 423.8 101.8 419.7 102.4 419.1C102.9 418.4 103.5 421.9 103.9 421.7C104.4 421.4 104.7 418.0 105.2 417.5C105.8 417.1 106.6 418.2 107.2 419.1C107.7 420.0 108.0 421.3 108.5 423.0C108.9 424.7 109.3 429.0 109.8 429.5C110.2 429.9 110.5 425.4 111.1 425.6C111.6 425.8 112.4 430.1 113.0 430.8C113.7 431.4 114.4 428.6 115.0 429.5C115.5 430.4 115.8 436.0 116.3 436.2C116.7 436.4 117.0 432.7 117.6 430.8C118.1 428.8 119.0 424.7 119.5 424.3C120.0 423.8 120.4 428.1 120.8 428.2C121.2 428.3 121.6 424.7 122.1 424.9C122.6 425.1 123.5 429.2 124.0 429.5C124.6 429.7 124.9 426.0 125.3 426.2C125.8 426.4 126.1 430.4 126.6 430.8C127.2 431.1 128.0 428.1 128.6 428.2C129.1 428.3 129.3 431.6 129.9 431.4C130.4 431.2 131.2 427.2 131.8 426.9C132.5 426.5 133.2 429.9 133.8 429.5C134.3 429.0 134.8 425.7 135.3 424.3C135.9 422.9 136.4 421.3 137.0 421.0C137.6 420.8 138.2 421.6 138.7 423.0C139.2 424.4 139.6 427.1 140.0 429.5C140.4 431.8 140.9 435.1 141.3 437.2C141.6 439.4 142.0 441.6 142.2 442.4" stroke="#ff9000" stroke-width="1.200" fill="none" stroke-linejoin="round"/><rect x="57" y="437.5" width="14" height="12" fill="#fff" opacity="0.850"/><rect x="131" y="437.5" width="22" height="12" fill="#fff" opacity="0.850"/><rect x="55.500" y="454.5" width="130" height="12" fill="#fff" stroke="#d4d4d4"/><circle cx="173" cy="365" r="7.500" fill="url(#redb)" stroke="#c00000" stroke-width="0.600"/><path d="M169.600 361.6l6.800 6.800M176.400 361.6l-6.800 6.800" stroke="#fff" stroke-width="2.300" stroke-linecap="round"/><path d="M166 384h13l2 2v12h-15z" fill="#2b2b2b"/><rect x="169" y="384" width="8" height="5" fill="#cfcfcf"/><rect x="169" y="392" width="9" height="6" fill="#9a9a9a"/><path d="M165 398L179 383" stroke="#e8b020" stroke-width="2.400"/><path d="M179 383l2-2" stroke="#e03030" stroke-width="2.400"/><path d="M168 418q1-4 4-6l7-8q1 0 1 1l-7 9q-2 3-5 4z" fill="#222"/><path d="M166 421.5h13" stroke="#ff9000" stroke-width="1.800"/><path d="M166.500 432.5h9l4 4v11h-13z" fill="#9a9a9a" stroke="#7d7d7d"/><path d="M168.500 438h8M168.500 440.5h8M168.500 443h8" stroke="#c8c8c8" stroke-width="1"/></svg>
<span class="t" style="left:59.0px;top:386.5px;font-size:12px;line-height:16px;color:#1c1c1c;transform:scaleX(0.779);">3 L</span>
<div class="a" style="left:59px;top:401px;width:6px;height:1px;background:#1c1c1c;"></div>
<span class="t" style="left:58.0px;top:436.0px;font-size:12px;line-height:16px;color:#2a2a2a;transform:scaleX(0.899);">20</span>
<span class="t" style="left:132.0px;top:436.0px;font-size:12px;line-height:16px;color:#2a2a2a;transform:scaleX(0.926);">3,0k</span>
<svg class="a" style="left:0;top:0;" width="200" height="760" viewBox="0 0 200 760"><path d="M48.500 565V467.5q0-2 2-2H128.500L156 437.5q1-1 2.500-1H188.500q2 0 2 2V565" fill="#e3e3e3" stroke="#cbcbcb"/><rect x="55.500" y="475.5" width="98" height="65" fill="#fff" stroke="#c9c9c9"/><path d="M63.8 475.5V540.5M69.4 475.5V540.5M73.7 475.5V540.5M77.3 475.5V540.5M80.3 475.5V540.5M82.8 475.5V540.5M85.1 475.5V540.5M87.2 475.5V540.5M100.6 475.5V540.5M108.4 475.5V540.5M114.0 475.5V540.5M118.3 475.5V540.5M121.8 475.5V540.5M124.8 475.5V540.5M127.4 475.5V540.5M129.7 475.5V540.5M131.7 475.5V540.5M145.2 475.5V540.5M56 484.8H153M56 494.1H153M56 503.4H153M56 512.7H153M56 522.0H153M56 531.3H153" stroke="#e4e4e4" stroke-width="1" fill="none"/><path d="M56.0 501.1C56.6 500.2 58.6 497.7 59.9 496.1C61.2 494.5 62.6 492.8 63.7 491.6C64.9 490.4 65.9 489.3 67.0 489.0C68.1 488.7 69.0 489.3 70.2 489.9C71.4 490.6 72.8 491.8 74.1 492.9C75.4 493.9 76.7 495.2 78.0 496.1C79.3 497.1 80.6 497.9 81.9 498.5C83.2 499.0 84.6 499.1 85.8 499.4C87.0 499.6 88.1 500.2 89.0 500.0C89.9 499.8 90.6 498.7 91.2 498.1C91.9 497.5 92.4 496.1 92.9 496.4C93.4 496.7 93.8 498.1 94.2 500.0C94.6 501.9 95.1 505.0 95.5 507.8C95.9 510.6 96.4 513.6 96.8 516.9C97.2 520.1 97.7 526.8 98.1 527.2C98.5 527.7 98.6 521.4 99.0 519.5C99.4 517.5 100.1 517.3 100.7 515.6C101.3 513.8 101.8 509.7 102.4 509.1C102.9 508.4 103.5 511.9 103.9 511.7C104.4 511.4 104.7 508.0 105.2 507.5C105.8 507.1 106.6 508.2 107.2 509.1C107.7 510.0 108.0 511.3 108.5 513.0C108.9 514.7 109.3 519.0 109.8 519.5C110.2 519.9 110.5 515.4 111.1 515.6C111.6 515.8 112.4 520.1 113.0 520.8C113.7 521.4 114.4 518.6 115.0 519.5C115.5 520.4 115.8 526.0 116.3 526.2C116.7 526.4 117.0 522.7 117.6 520.8C118.1 518.8 119.0 514.7 119.5 514.3C120.0 513.8 120.4 518.1 120.8 518.2C121.2 518.3 121.6 514.7 122.1 514.9C122.6 515.1 123.5 519.2 124.0 519.5C124.6 519.7 124.9 516.0 125.3 516.2C125.8 516.4 126.1 520.4 126.6 520.8C127.2 521.1 128.0 518.1 128.6 518.2C129.1 518.3 129.3 521.6 129.9 521.4C130.4 521.2 131.2 517.2 131.8 516.9C132.5 516.5 133.2 519.9 133.8 519.5C134.3 519.0 134.8 515.7 135.3 514.3C135.9 512.9 136.4 511.3 137.0 511.0C137.6 510.8 138.2 511.6 138.7 513.0C139.2 514.4 139.6 517.1 140.0 519.5C140.4 521.8 140.9 525.1 141.3 527.2C141.6 529.4 142.0 531.6 142.2 532.4" stroke="#0a9a10" stroke-width="1.200" fill="none" stroke-linejoin="round"/><rect x="57" y="527.5" width="14" height="12" fill="#fff" opacity="0.850"/><rect x="131" y="527.5" width="22" height="12" fill="#fff" opacity="0.850"/><rect x="55.500" y="544.5" width="130" height="12" fill="#fff" stroke="#d4d4d4"/><circle cx="173" cy="455" r="7.500" fill="url(#redb)" stroke="#c00000" stroke-width="0.600"/><path d="M169.600 451.6l6.800 6.800M176.400 451.6l-6.800 6.800" stroke="#fff" stroke-width="2.300" stroke-linecap="round"/><path d="M166 474h13l2 2v12h-15z" fill="#2b2b2b"/><rect x="169" y="474" width="8" height="5" fill="#cfcfcf"/><rect x="169" y="482" width="9" height="6" fill="#9a9a9a"/><path d="M165 488L179 473" stroke="#e8b020" stroke-width="2.400"/><path d="M179 473l2-2" stroke="#e03030" stroke-width="2.400"/><path d="M168 508q1-4 4-6l7-8q1 0 1 1l-7 9q-2 3-5 4z" fill="#222"/><path d="M166 511.5h13" stroke="#0a9a10" stroke-width="1.800"/><path d="M166.500 522.5h9l4 4v11h-13z" fill="#9a9a9a" stroke="#7d7d7d"/><path d="M168.500 528h8M168.500 530.5h8M168.500 533h8" stroke="#c8c8c8" stroke-width="1"/></svg>
<span class="t" style="left:59.0px;top:476.5px;font-size:12px;line-height:16px;color:#1c1c1c;transform:scaleX(0.779);">4 L</span>
<div class="a" style="left:59px;top:491px;width:6px;height:1px;background:#1c1c1c;"></div>
<span class="t" style="left:58.0px;top:526.0px;font-size:12px;line-height:16px;color:#2a2a2a;transform:scaleX(0.899);">20</span>
<span class="t" style="left:132.0px;top:526.0px;font-size:12px;line-height:16px;color:#2a2a2a;transform:scaleX(0.926);">3,0k</span>
<svg class="a" style="left:0;top:0;" width="200" height="760" viewBox="0 0 200 760"><path d="M48.500 743V557.5q0-2 2-2H128.500L156 527.5q1-1 2.500-1H188.500q2 0 2 2V743" fill="#fdfdfd" stroke="#cbcbcb"/><path d="M48.500 743.5H190.500" stroke="#cbcbcb"/><rect x="55.500" y="565.5" width="98" height="65" fill="#fff" stroke="#c9c9c9"/><path d="M63.8 565.5V630.5M69.4 565.5V630.5M73.7 565.5V630.5M77.3 565.5V630.5M80.3 565.5V630.5M82.8 565.5V630.5M85.1 565.5V630.5M87.2 565.5V630.5M100.6 565.5V630.5M108.4 565.5V630.5M114.0 565.5V630.5M118.3 565.5V630.5M121.8 565.5V630.5M124.8 565.5V630.5M127.4 565.5V630.5M129.7 565.5V630.5M131.7 565.5V630.5M145.2 565.5V630.5M56 574.8H153M56 584.1H153M56 593.4H153M56 602.7H153M56 612.0H153M56 621.3H153" stroke="#e4e4e4" stroke-width="1" fill="none"/><path d="M56.2 617.0C56.7 615.6 58.0 610.7 58.8 608.8C59.5 606.8 60.0 605.3 60.8 605.5C61.5 605.7 62.2 607.8 63.0 610.0C63.8 612.2 64.7 616.8 65.5 618.8C66.3 620.8 67.1 621.8 68.0 622.0C68.9 622.2 69.6 623.7 70.8 620.0C71.9 616.3 73.9 606.9 75.0 600.0C76.1 593.1 76.7 578.8 77.5 578.8C78.3 578.8 79.0 593.5 80.0 600.0C81.0 606.5 82.1 613.7 83.8 617.5C85.4 621.3 87.3 622.0 90.0 623.0C92.7 624.0 96.2 624.0 100.0 623.8C103.8 623.5 108.3 622.4 112.5 621.2C116.7 620.1 120.8 618.5 125.0 617.0C129.2 615.5 132.8 614.2 137.5 612.5C142.2 610.8 150.4 607.9 153.0 607.0" stroke="#ff0000" stroke-width="1.200" fill="none" stroke-linejoin="round"/><rect x="57" y="617.5" width="14" height="12" fill="#fff" opacity="0.850"/><rect x="131" y="617.5" width="22" height="12" fill="#fff" opacity="0.850"/><rect x="55.500" y="634.5" width="130" height="79" fill="#fff" stroke="#d4d4d4"/><circle cx="173" cy="545" r="7.500" fill="url(#redb)" stroke="#c00000" stroke-width="0.600"/><path d="M169.600 541.6l6.800 6.800M176.400 541.6l-6.800 6.800" stroke="#fff" stroke-width="2.300" stroke-linecap="round"/><path d="M166 564h13l2 2v12h-15z" fill="#2b2b2b"/><rect x="169" y="564" width="8" height="5" fill="#cfcfcf"/><rect x="169" y="572" width="9" height="6" fill="#9a9a9a"/><path d="M165 578L179 563" stroke="#e8b020" stroke-width="2.400"/><path d="M179 563l2-2" stroke="#e03030" stroke-width="2.400"/><path d="M168 598q1-4 4-6l7-8q1 0 1 1l-7 9q-2 3-5 4z" fill="#222"/><path d="M166 601.5h13" stroke="#ff0000" stroke-width="1.800"/><path d="M166.500 612.5h9l4 4v11h-13z" fill="#9a9a9a" stroke="#7d7d7d"/><path d="M168.500 618h8M168.500 620.5h8M168.500 623h8" stroke="#c8c8c8" stroke-width="1"/></svg>
<span class="t" style="left:59.0px;top:566.5px;font-size:12px;line-height:16px;color:#1c1c1c;transform:scaleX(0.779);">5 1</span>
<div class="a" style="left:59px;top:581px;width:6px;height:1px;background:#1c1c1c;"></div>
<span class="t" style="left:58.0px;top:616.0px;font-size:12px;line-height:16px;color:#2a2a2a;transform:scaleX(0.899);">20</span>
<span class="t" style="left:132.0px;top:616.0px;font-size:12px;line-height:16px;color:#2a2a2a;transform:scaleX(0.926);">3,0k</span>
<div class="a" style="left:0px;top:0px;width:1920px;height:24px;background:#535353;"></div>
<div class="a" style="left:0px;top:24px;width:1920px;height:1px;background:#3b3b3b;"></div>
<div class="a" style="left:5px;top:3px;width:17px;height:16px;background:#001e36;border:1px solid #0b2f4f;box-sizing:border-box;border-radius:3px;"></div>
<span class="t" style="left:8.0px;top:5.0px;font-size:9.67px;line-height:13px;color:#31a8ff;transform:scaleX(0.930);font-weight:bold;">Ps</span>
<span class="t" style="left:35.0px;top:4.5px;font-size:11.81px;line-height:15px;color:#f0f0f0;transform:scaleX(0.930);">Файл</span>
<span class="t" style="left:75.0px;top:3.5px;font-size:13px;line-height:17px;color:#f0f0f0;transform:scaleX(0.909);">Редактирование</span>
<span class="t" style="left:177.0px;top:3.5px;font-size:13px;line-height:17px;color:#f0f0f0;transform:scaleX(0.940);">Изображение</span>
<span class="t" style="left:266.0px;top:4.0px;font-size:11.94px;line-height:16px;color:#f0f0f0;transform:scaleX(0.930);">Слои</span>
<span class="t" style="left:306.0px;top:4.0px;font-size:12.39px;line-height:16px;color:#f0f0f0;transform:scaleX(0.930);">Текст</span>
<span class="t" style="left:347.0px;top:4.0px;font-size:12.38px;line-height:16px;color:#f0f0f0;transform:scaleX(0.930);">Выделение</span>
<span class="t" style="left:420.0px;top:3.5px;font-size:13px;line-height:17px;color:#f0f0f0;transform:scaleX(0.916);">Фильтр</span>
<span class="t" style="left:472.0px;top:3.5px;font-size:13px;line-height:17px;color:#f0f0f0;transform:scaleX(0.943);">Просмотр</span>
<span class="t" style="left:540.0px;top:3.5px;font-size:13px;line-height:17px;color:#f0f0f0;transform:scaleX(0.925);">Подключаемые модули</span>
<span class="t" style="left:683.0px;top:3.5px;font-size:13px;line-height:17px;color:#f0f0f0;transform:scaleX(0.960);">Окно</span>
<span class="t" style="left:724.0px;top:3.5px;font-size:13px;line-height:17px;color:#f0f0f0;transform:scaleX(0.902);">Справка</span>
<svg class="a" style="left:1810px;top:0px;" width="110" height="24" viewBox="0 0 110 24"><rect x="4.500" y="-4.500" width="102" height="23" rx="4" fill="none" stroke="#636363"/><path d="M32.500 0v18M59.500 0v18" stroke="#5e5e5e"/><path d="M13 12.500h10" stroke="#d8d8d8" stroke-width="1.800"/><rect x="40.500" y="8.500" width="7" height="5.500" fill="none" stroke="#d8d8d8" stroke-width="1.400"/><path d="M43 8.500v-2.500h8v5.500h-3.500" fill="none" stroke="#d8d8d8" stroke-width="1.400"/><path d="M78.500 5.500l8.500 8M87 5.500l-8.500 8" stroke="#d8d8d8" stroke-width="1.800"/></svg>
<div class="a" style="left:0px;top:25px;width:1920px;height:33px;background:#535353;"></div>
<div class="a" style="left:0px;top:58px;width:1920px;height:1px;background:#3b3b3b;"></div>
<svg class="a" style="left:0;top:0;" width="1000" height="60" viewBox="0 0 1000 60"><path d="M9.500 32v20M12.500 32v20" stroke="#474747" stroke-width="1" stroke-dasharray="1 1"/><path d="M28 33.500l-8.500 8h2.500v7.500h4.500v-5h3v5h4.500v-7.500h2.500z" fill="#ececec"/><path d="M53.5 31v22" stroke="#444" stroke-width="1"/><path d="M102.5 31v22" stroke="#444" stroke-width="1"/><path d="M183.5 31v22" stroke="#444" stroke-width="1"/><path d="M489.5 31v22" stroke="#444" stroke-width="1"/><path d="M657.5 31v22" stroke="#444" stroke-width="1"/><path d="M689.5 31v22" stroke="#444" stroke-width="1"/><path d="M722.5 31v22" stroke="#444" stroke-width="1"/><path d="M755.5 31v22" stroke="#444" stroke-width="1"/><path d="M62.500 47.500l13-13" stroke="#dcdcdc" stroke-width="1.500"/><path d="M87.500 41l3 3l3-3" stroke="#cfcfcf" stroke-width="1.200" fill="none"/><rect x="111.5" y="33.5" width="68" height="13" rx="2" fill="#454545" stroke="#646464"/><path d="M168.8 38.4l3.2 3.2l3.2-3.2" stroke="#d0d0d0" stroke-width="1.200" fill="none"/><rect x="235.5" y="31.5" width="29" height="19" rx="2" fill="#535353" stroke="#464646"/><rect x="237.500" y="33.500" width="25" height="15" fill="#3300ff"/><rect x="318.5" y="31.5" width="29" height="19" rx="2" fill="#535353" stroke="#464646"/><rect x="320.500" y="33.500" width="25" height="15" fill="#3300ff"/><rect x="325.500" y="38.500" width="15" height="5" fill="#3a2adf" stroke="#fff" stroke-width="1.200"/><rect x="352.5" y="32.5" width="77" height="16" rx="2" fill="#454545" stroke="#5e5e5e"/><path d="M414.500 33v15" stroke="#5e5e5e"/><path d="M418.8 39.4l3.2 3.2l3.2-3.2" stroke="#d0d0d0" stroke-width="1.200" fill="none"/><rect x="436.5" y="32.5" width="47" height="16" rx="2" fill="#454545" stroke="#5e5e5e"/><path d="M440 41.500h30" stroke="#f2f2f2" stroke-width="1.400"/><path d="M473.7 39.6l2.8 2.8l2.8-2.8" stroke="#d0d0d0" stroke-width="1.200" fill="none"/><rect x="511.5" y="32.5" width="42" height="17" rx="2" fill="#434343" stroke="#646464"/><g fill="none" stroke="#cfcfcf" stroke-width="1.300"><rect x="563.500" y="38.500" width="7" height="5" rx="2.500"/><rect x="570.500" y="38.500" width="7" height="5" rx="2.500"/></g><path d="M566.500 41h8" stroke="#cfcfcf" stroke-width="1.300"/><rect x="606.5" y="32.5" width="42" height="17" rx="2" fill="#434343" stroke="#646464"/><rect x="668" y="36.500" width="11" height="11" fill="#e6e6e6"/><path d="M679.500 49h3l-1.500 1.800z" fill="#e6e6e6"/><path d="M701 34v15" stroke="#e0e0e0" stroke-width="1.400"/><rect x="703.500" y="36" width="7" height="4" fill="#e0e0e0"/><rect x="703.500" y="43" width="11" height="4" fill="#e0e0e0"/><path d="M712.500 49h3l-1.500 1.800z" fill="#e6e6e6"/><path d="M733.500 45v-7M731.500 40l2-2.300l2 2.300" stroke="#e0e0e0" stroke-width="1.100" fill="none"/><path d="M743.500 33.500l6 3l-6 3l-6-3z" fill="#e0e0e0"/><path d="M737.500 40.500l6 3l6-3M737.500 43.500l6 3l6-3M737.500 46.500l6 3l6-3" stroke="#e0e0e0" stroke-width="1.100" fill="none"/><rect x="771.700" y="33.500" width="2.600" height="15" fill="#e0e0e0" transform="rotate(0 773 41)"/><rect x="771.700" y="33.500" width="2.600" height="15" fill="#e0e0e0" transform="rotate(45 773 41)"/><rect x="771.700" y="33.500" width="2.600" height="15" fill="#e0e0e0" transform="rotate(90 773 41)"/><rect x="771.700" y="33.500" width="2.600" height="15" fill="#e0e0e0" transform="rotate(135 773 41)"/><rect x="771.700" y="33.500" width="2.600" height="15" fill="#e0e0e0" transform="rotate(180 773 41)"/><rect x="771.700" y="33.500" width="2.600" height="15" fill="#e0e0e0" transform="rotate(225 773 41)"/><rect x="771.700" y="33.500" width="2.600" height="15" fill="#e0e0e0" transform="rotate(270 773 41)"/><rect x="771.700" y="33.500" width="2.600" height="15" fill="#e0e0e0" transform="rotate(315 773 41)"/><circle cx="773" cy="41" r="5.200" fill="#e0e0e0"/><circle cx="773" cy="41" r="2.300" fill="#535353"/><path d="M779.500 49h3l-1.500 1.800z" fill="#e6e6e6"/><rect x="842.5" y="32.5" width="42" height="17" rx="2" fill="#434343" stroke="#646464"/><rect x="888" y="36" width="10" height="10" rx="2" fill="#f0f0f0"/><path d="M890 41l2.300 2.500l4-5" stroke="#222" stroke-width="1.600" fill="none"/></svg>
<span class="t" style="left:119.0px;top:33.0px;font-size:11.13px;line-height:14px;color:#e3e3e3;transform:scaleX(0.930);">Фигура</span>
<span class="t" style="left:190.0px;top:34.5px;font-size:10.42px;line-height:14px;color:#c8c8c8;transform:scaleX(0.930);">Заливка:</span>
<span class="t" style="left:270.0px;top:34.5px;font-size:10.55px;line-height:14px;color:#c8c8c8;transform:scaleX(0.930);">Обводка:</span>
<span class="t" style="left:357.0px;top:33.5px;font-size:11.57px;line-height:15px;color:#e3e3e3;transform:scaleX(0.930);">1 пикс.</span>
<span class="t" style="left:492.0px;top:34.5px;font-size:10.8px;line-height:14px;color:#c8c8c8;transform:scaleX(0.930);">Ш:</span>
<div class="a" style="left:512px;top:33px;width:41px;height:16px;overflow:hidden;"><span class="t" style="left:3.5px;top:0.5px;font-size:12px;line-height:16px;color:#e3e3e3;">81,99 пикс.</span></div>
<span class="t" style="left:590.0px;top:34.5px;font-size:10.81px;line-height:14px;color:#c8c8c8;transform:scaleX(0.930);">В:</span>
<span class="t" style="left:611.0px;top:34.0px;font-size:11.57px;line-height:15px;color:#e3e3e3;transform:scaleX(0.930);">5 пикс.</span>
<span class="t" style="left:791.0px;top:34.5px;font-size:10.95px;line-height:14px;color:#c8c8c8;transform:scaleX(0.930);">Толщина:</span>
<span class="t" style="left:847.0px;top:34.0px;font-size:11.57px;line-height:15px;color:#e3e3e3;transform:scaleX(0.930);">1 пикс.</span>
<span class="t" style="left:904.0px;top:34.5px;font-size:10.61px;line-height:14px;color:#e3e3e3;transform:scaleX(0.930);">Выров. края</span>
<svg class="a" style="left:1780px;top:33px;overflow:hidden;" width="125" height="5" viewBox="0 0 125 5"><path d="M13 0l3 4l-3 3l-3-3z" fill="#cfcfcf"/><circle cx="46" cy="5.500" r="4" fill="none" stroke="#cfcfcf" stroke-width="1.500"/><path d="M80 0v5M75.500 1l1.500 3M84.500 1l-1.500 3" stroke="#cfcfcf" stroke-width="1.300"/><path d="M101 3.500h16" stroke="#cfcfcf" stroke-width="1.600"/></svg>
<div class="a" style="left:1917px;top:25px;width:1px;height:33px;background:#3f3f3f;"></div>
<div class="a" style="left:0px;top:59px;width:1920px;height:29px;background:#424242;"></div>
<div class="a" style="left:43px;top:59px;width:227px;height:29px;background:#535353;"></div>
<div class="a" style="left:42px;top:59px;width:1px;height:29px;background:#383838;"></div>
<div class="a" style="left:270px;top:59px;width:1px;height:29px;background:#383838;"></div>
<span class="t" style="left:52.0px;top:65.0px;font-size:12px;line-height:16px;color:#f0f0f0;transform:scaleX(0.930);font-weight:bold;">Ок.png @ 100% (Линия 3, RGB/8#) *</span>
<svg class="a" style="left:250px;top:68px;" width="10" height="10" viewBox="0 0 10 10"><path d="M1.500 1.500l7 7M8.500 1.500l-7 7" stroke="#bdbdbd" stroke-width="1.100"/></svg>
<div class="a" style="left:0px;top:59px;width:40px;height:981px;background:#535353;"></div>
<div class="a" style="left:40px;top:59px;width:3px;height:981px;background:#3d3d3d;"></div>
<div class="a" style="left:0px;top:59px;width:40px;height:12px;background:#484848;"></div>
<svg class="a" style="left:5px;top:61px;" width="10" height="8" viewBox="0 0 10 8"><path d="M1 1l2.500 3l-2.500 3M5 1l2.500 3l-2.500 3" stroke="#e0e0e0" stroke-width="1.100" fill="none"/></svg>
<div class="a" style="left:10px;top:73px;width:19px;height:4px;background:repeating-linear-gradient(90deg,#474747 0 1px,transparent 1px 2px);"></div>
<svg class="a" style="left:0;top:0;" width="43" height="840" viewBox="0 0 43 840"><rect x="4" y="582" width="31" height="24" rx="3" fill="#383838"/><path d="M32 109h-3l3-3z" fill="#c9c9c9"/><path d="M32 135h-3l3-3z" fill="#c9c9c9"/><path d="M32 161h-3l3-3z" fill="#c9c9c9"/><path d="M32 187h-3l3-3z" fill="#c9c9c9"/><path d="M32 213h-3l3-3z" fill="#c9c9c9"/><path d="M32 239h-3l3-3z" fill="#c9c9c9"/><path d="M32 265h-3l3-3z" fill="#c9c9c9"/><path d="M32 291h-3l3-3z" fill="#c9c9c9"/><path d="M32 317h-3l3-3z" fill="#c9c9c9"/><path d="M32 343h-3l3-3z" fill="#c9c9c9"/><path d="M32 369h-3l3-3z" fill="#c9c9c9"/><path d="M32 395h-3l3-3z" fill="#c9c9c9"/><path d="M32 421h-3l3-3z" fill="#c9c9c9"/><path d="M32 447h-3l3-3z" fill="#c9c9c9"/><path d="M32 473h-3l3-3z" fill="#c9c9c9"/><path d="M32 499h-3l3-3z" fill="#c9c9c9"/><path d="M32 525h-3l3-3z" fill="#c9c9c9"/><path d="M32 551h-3l3-3z" fill="#c9c9c9"/><path d="M32 577h-3l3-3z" fill="#c9c9c9"/><path d="M32 603h-3l3-3z" fill="#c9c9c9"/><path d="M32 629h-3l3-3z" fill="#c9c9c9"/><path d="M32 681h-3l3-3z" fill="#c9c9c9"/><path d="M19 92v16M11 100h16" stroke="#dedede" stroke-width="1.400"/><path d="M19 90.5l3 3.500h-6zM19 109.5l3-3.500h-6zM9.500 100l3.500-3v6zM28.500 100l-3.500-3v6z" fill="#dedede"/><rect x="11.500" y="119.5" width="15" height="12" fill="none" stroke="#dedede" stroke-width="1.400" stroke-dasharray="3 2"/><circle cx="17" cy="153" r="6" fill="none" stroke="#dedede" stroke-width="1.200" stroke-dasharray="2 1.500"/><path d="M14 157q2-1 3-3l7-9q1.500 0 1.500 1.500l-7 9q-1.500 2.500-4.500 3z" fill="#dedede" stroke="#535353" stroke-width="0.600"/><rect x="11.500" y="170.5" width="13" height="13" fill="none" stroke="#dedede" stroke-width="1.200" stroke-dasharray="1.500 1.500"/><rect x="14" y="173" width="6" height="6" fill="#dedede"/><path d="M19 177l8 7.500h-4.500l-3 3z" fill="#dedede" stroke="#535353" stroke-width="0.700"/><path d="M14.500 195v14.500h14M9.500 199.5h14.500v14" stroke="#dedede" stroke-width="1.700" fill="none"/><rect x="11.500" y="223.5" width="15" height="13" fill="none" stroke="#dedede" stroke-width="1.400"/><path d="M11.500 223.5l15 13M26.500 223.5l-15 13" stroke="#dedede" stroke-width="1.200"/><path d="M11 264l1-3.500l8-8l2.500 2.500l-8 8z" fill="none" stroke="#dedede" stroke-width="1.300"/><path d="M19 251l4 4M21.500 253.5l3.500-3.500q1.500-2.500-0.500-3.500q-2-1-3 0.500l-3.500 3.500" stroke="#dedede" stroke-width="2" fill="#dedede"/><g transform="rotate(-45 19 282)"><rect x="9.500" y="278" width="19" height="8" rx="4" fill="#dedede"/><rect x="15.500" y="278" width="7" height="8" fill="#535353" opacity="0.550"/></g><path d="M11 278a8 8 0 0 1 8-6" stroke="#dedede" stroke-width="1.100" fill="none" stroke-dasharray="2 1.500"/><path d="M25.500 298.5q1.500 0.500 1 2l-8 9.500l-2.500-2z" fill="#dedede"/><path d="M15 309l2.500 2q-0.500 4-6 5.500q2.500-3 1-5q1-2.500 2.500-2.500z" fill="#dedede"/><path d="M16.500 328.5a3.200 3.200 0 1 1 5 0q-1 2.500 0 4.500h4.500v4h-14v-4h4.500q1-2-0-4.500z" fill="#dedede"/><path d="M12 340.5h14" stroke="#dedede" stroke-width="1.600"/><path d="M26.500 351q1.500 0.500 1 2l-7 9l-2.500-2z" fill="#dedede"/><path d="M17.500 361l2.500 2q-0.500 4-6 5.500q2.500-3 1-5q0.500-2.500 2.500-2.500z" fill="#dedede"/><path d="M10.500 359a6 6 0 0 1 8-5.500" stroke="#dedede" stroke-width="1.300" fill="none"/><path d="M9 355.5l1.500 4.500l4-2z" fill="#dedede"/><path d="M24 362a6 6 0 0 1-2 4" stroke="#dedede" stroke-width="1" stroke-dasharray="1 1.500" fill="none"/><path d="M12 389l9-9.500l6 4.500l-8 9.500h-4z" fill="none" stroke="#dedede" stroke-width="1.300"/><path d="M16 384.5l6 4.500l4.500-5.500l-5.500-4z" fill="#dedede"/><path d="M13 394h14" stroke="#dedede" stroke-width="1.200"/><defs><linearGradient id="tg" x1="0" y1="0" x2="1" y2="0"><stop offset="0" stop-color="#3a3a3a"/><stop offset="1" stop-color="#e4e4e4"/></linearGradient></defs><rect x="11.500" y="405.5" width="15" height="13" fill="url(#tg)" stroke="#dedede" stroke-width="1.400"/><path d="M19 429.5q6 7 6 11a6 6 0 0 1-12 0q0-4 6-11z" fill="#dedede"/><path d="M24 454.5q1.500 0.500 1 2l-5.500 7l-2.500-2z" fill="#dedede"/><path d="M16.500 462.5l2.500 2q-0.500 3.500-6.500 5q2.500-3 1.500-4.500q1-2.500 2.500-2.500z" fill="#dedede"/><ellipse cx="24" cy="469" rx="4" ry="3.300" fill="#dedede"/><circle cx="22" cy="487" r="5.200" fill="#dedede"/><path d="M18.500 490.5l-7.500 7.500" stroke="#dedede" stroke-width="2.200" stroke-linecap="round"/><g transform="rotate(40 19 516)"><path d="M19 525l-4.500-9l1.500-4h6l1.500 4z" fill="none" stroke="#dedede" stroke-width="1.400" stroke-linejoin="round"/><path d="M19 524v-6" stroke="#dedede" stroke-width="1.100"/><circle cx="19" cy="517.5" r="1.300" fill="#dedede"/><rect x="15" y="507.5" width="8" height="3" fill="#dedede"/></g><path d="M12 534h14v4h-1.500l-0.500-2h-3.500v12.500l2 0.500v1.500h-7v-1.500l2-0.500v-12.500h-3.500l-0.500 2h-1.500z" fill="#dedede"/><path d="M15 559.5l9.500 9.500h-4.200l2.200 5.500l-2.400 1l-2.300-5.500l-2.800 3z" fill="#111" stroke="#eee" stroke-width="0.900"/><path d="M10.500 601l16-14" stroke="#f4f4f4" stroke-width="1.600"/><path d="M14 621v-5q0-1.500 1.300-1.500t1.300 1.500v-3q0-1.500 1.300-1.500t1.300 1.500v-0.500q0-1.500 1.300-1.500t1.300 1.500v2q0-1.500 1.300-1.500t1.300 1.500v8q0 7-6.500 7q-4 0-6-4l-2.500-4.500q-0.500-1.500 0.700-2t2.200 1z" fill="#dedede"/><circle cx="17" cy="644" r="5.500" fill="none" stroke="#dedede" stroke-width="1.700"/><path d="M21 648l5.500 5.500" stroke="#dedede" stroke-width="2.300" stroke-linecap="round"/><circle cx="13.500" cy="672" r="1.600" fill="#dedede"/><circle cx="19" cy="672" r="1.600" fill="#dedede"/><circle cx="24.500" cy="672" r="1.600" fill="#dedede"/><rect x="7" y="694" width="8" height="8" fill="#fff"/><rect x="4" y="691" width="8" height="8" fill="#000" stroke="#f0f0f0" stroke-width="1"/><path d="M24.500 693.500q5.500 0 5.500 5.500" stroke="#dedede" stroke-width="1.300" fill="none"/><path d="M25.500 691l-3 2.500l3 2.500zM27.500 698l2.500 3l2.500-3z" fill="#dedede"/><rect x="15.500" y="717.500" width="17" height="17" fill="#fff" stroke="#8a8a8a"/><rect x="4.500" y="706.500" width="18" height="18" fill="#3300ff" stroke="#e8e8e8" stroke-width="1.400"/><rect x="10.500" y="747.500" width="16" height="12" fill="none" stroke="#dedede" stroke-width="1.200"/><circle cx="18.500" cy="753.500" r="3.600" fill="none" stroke="#dedede" stroke-width="1" stroke-dasharray="1 1"/><rect x="13.500" y="774.500" width="13" height="8" fill="none" stroke="#dedede" stroke-width="1.300"/><path d="M13.500 778.500h-3v8h13v-3.500" fill="none" stroke="#dedede" stroke-width="1.300"/><path d="M32 787h-3l3-3z" fill="#c9c9c9"/><path d="M12 811a5 5 0 0 1 4-7M15 806l2-2.500M19 812h9v8h-9z" stroke="#8c8c8c" stroke-width="1.200" fill="none"/><path d="M20 819l3-3l2 2l1-1l2 2z" fill="#8c8c8c"/><circle cx="25.500" cy="805.500" r="2.600" fill="#1e8fe0"/></svg>
<div class="a" style="left:1750px;top:88px;width:16px;height:935px;background:#4a4a4a;"></div>
<div class="a" style="left:1752px;top:424px;width:12px;height:268px;background:#6b6b6b;"></div>
<div class="a" style="left:1751px;top:1004px;width:14px;height:14px;"></div>
<svg class="a" style="left:1752px;top:1006px;" width="12" height="10" viewBox="0 0 12 10"><path d="M2.500 3l3.500 3.500l3.500-3.500" stroke="#9a9a9a" stroke-width="1.200" fill="none"/></svg>
<div class="a" style="left:1766px;top:59px;width:154px;height:981px;background:#3c3c3c;"></div>
<div class="a" style="left:1768px;top:88px;width:39px;height:952px;background:#535353;"></div>
<div class="a" style="left:1809px;top:88px;width:111px;height:952px;background:#535353;"></div>
<div class="a" style="left:1766px;top:59px;width:154px;height:29px;background:#424242;"></div>
<div class="a" style="left:43px;top:1023px;width:1723px;height:17px;background:#4a4a4a;"></div>
<div class="a" style="left:0px;top:1023px;width:40px;height:17px;background:#535353;"></div>
<div class="a" style="left:43px;top:1023px;width:47px;height:17px;background:#4d4d4d;"></div>
<div class="a" style="left:90px;top:1023px;width:183px;height:17px;background:#585858;"></div>
<span class="t" style="left:50.0px;top:1023.5px;font-size:13px;line-height:17px;color:#e6e6e6;transform:scaleX(0.962);">100%</span>
<span class="t" style="left:101.0px;top:1024.5px;font-size:10.5px;line-height:14px;color:#dcdcdc;transform:scaleX(0.967);">1920 пикс. x 1080 пикс. (96 ppi)</span>
<svg class="a" style="left:262px;top:1026px;" width="8" height="11" viewBox="0 0 8 11"><path d="M2 1.500l3.500 4l-3.500 4" stroke="#cfcfcf" stroke-width="1.200" fill="none"/></svg>
<svg class="a" style="left:281px;top:1027px;" width="8" height="10" viewBox="0 0 8 10"><path d="M5.500 1.500l-3 3.500l3 3.500" stroke="#8f8f8f" stroke-width="1.200" fill="none"/></svg>
<div class="a" style="left:742px;top:1025px;width:480px;height:13px;background:#6b6b6b;"></div>
<svg class="a" style="left:1736px;top:1027px;" width="8" height="10" viewBox="0 0 8 10"><path d="M2.500 1.500l3 3.500l-3 3.500" stroke="#8f8f8f" stroke-width="1.200" fill="none"/></svg>
<div class="a" style="left:1750px;top:1023px;width:16px;height:17px;background:#535353;"></div>
<div class="a" style="left:1202px;top:142px;width:512px;height:35px;background:#464646;border-radius:5px;box-shadow:0 1px 3px rgba(0,0,0,0.35);"></div>
<svg class="a" style="left:0;top:0;" width="1750" height="200" viewBox="0 0 1750 200"><rect x="1207" y="147.5" width="5" height="1.600" fill="#d8d8d8"/><rect x="1207" y="150.7" width="5" height="1.600" fill="#d8d8d8"/><rect x="1207" y="153.9" width="5" height="1.600" fill="#d8d8d8"/><rect x="1207" y="157.1" width="5" height="1.600" fill="#d8d8d8"/><rect x="1207" y="160.3" width="5" height="1.600" fill="#d8d8d8"/><rect x="1207" y="163.5" width="5" height="1.600" fill="#d8d8d8"/><rect x="1207" y="166.7" width="5" height="1.600" fill="#d8d8d8"/><rect x="1207" y="169.9" width="5" height="1.600" fill="#d8d8d8"/><rect x="1269.5" y="149.5" width="29" height="19" rx="2" fill="#464646" stroke="#5a5a5a"/><rect x="1271.500" y="151.500" width="25" height="15" fill="#3300ff"/><rect x="1357.5" y="149.5" width="29" height="19" rx="2" fill="#464646" stroke="#5a5a5a"/><rect x="1359.500" y="151.500" width="25" height="15" fill="#3300ff"/><rect x="1364.500" y="156.500" width="15" height="5" fill="#3a2adf" stroke="#fff" stroke-width="1.200"/><rect x="1391.5" y="150.5" width="94" height="17" rx="2" fill="#3e3e3e" stroke="#5c5c5c"/><path d="M1471.500 151v16" stroke="#5c5c5c"/><path d="M1475.8 157.9l3.2 3.2l3.2-3.2" stroke="#d0d0d0" stroke-width="1.200" fill="none"/><rect x="1493.5" y="150.5" width="47" height="17" rx="2" fill="#3e3e3e" stroke="#5c5c5c"/><path d="M1497 159.500h29" stroke="#f2f2f2" stroke-width="1.400"/><path d="M1530.7 157.6l2.8 2.8l2.8-2.8" stroke="#d0d0d0" stroke-width="1.200" fill="none"/><path d="M1561 155.500h17M1561 163.500h17" stroke="#e0e0e0" stroke-width="1.300"/><path d="M1569 160l5 3.500l-5 3.500zM1575 152.500v6" stroke="#e0e0e0" stroke-width="1.300" fill="#e0e0e0"/><rect x="1603.500" y="152.500" width="11" height="11" fill="#464646" stroke="#e0e0e0" stroke-width="1.400"/><rect x="1607.500" y="156.500" width="11" height="11" fill="#e0e0e0"/><path d="M1613 159v6M1610 162h6" stroke="#464646" stroke-width="1.400"/><path d="M1645 154.500h16M1645 159.500h16M1645 164.500h16" stroke="#e0e0e0" stroke-width="1.200"/><circle cx="1650" cy="154.500" r="2" fill="#464646" stroke="#e0e0e0" stroke-width="1.200"/><circle cx="1657" cy="159.500" r="2" fill="#464646" stroke="#e0e0e0" stroke-width="1.200"/><circle cx="1651" cy="164.500" r="2" fill="#464646" stroke="#e0e0e0" stroke-width="1.200"/><circle cx="1688.500" cy="159.500" r="1.500" fill="#e0e0e0"/><circle cx="1694" cy="159.500" r="1.500" fill="#e0e0e0"/><circle cx="1699.500" cy="159.500" r="1.500" fill="#e0e0e0"/></svg>
<span class="t" style="left:1219.0px;top:150.5px;font-size:13px;line-height:17px;color:#dadada;transform:scaleX(0.919);">Заливка</span>
<span class="t" style="left:1305.0px;top:150.5px;font-size:13px;line-height:17px;color:#dadada;transform:scaleX(0.922);">Обводка</span>
<span class="t" style="left:1397.0px;top:151.0px;font-size:13px;line-height:17px;color:#ececec;">1 пикс.</span>
<div class="a" style="left:1729px;top:38px;width:191px;height:387px;background:#535353;overflow:hidden;border-radius:5px 0 0 0;box-shadow:-1px 1px 4px rgba(0,0,0,0.45);">
<div class="a" style="left:0;top:0;width:191px;height:41px;background:#424242;"></div>
<div class="a" style="left:0;top:13px;width:63px;height:28px;background:#535353;"></div>
<div class="a" style="left:63px;top:13px;width:1px;height:28px;background:#383838;"></div>
<div class="a" style="left:127px;top:13px;width:1px;height:28px;background:#383838;"></div>
<div class="a" style="left:0;top:74px;width:191px;height:1px;background:#454545;"></div>
<div class="a" style="left:0;top:190px;width:191px;height:1px;background:#454545;"></div>
<div class="a" style="left:0;top:336px;width:191px;height:1px;background:#454545;"></div>
<div class="a" style="left:0;top:353px;width:191px;height:26px;background:#535353;"></div>
<div class="a" style="left:0;top:378px;width:191px;height:9px;background:#464646;border-top:1px solid #3a3a3a;"></div>
<div class="a" style="left:106px;top:381px;width:19px;height:4px;background:repeating-linear-gradient(90deg,#6a6a6a 0 1px,transparent 1px 2px);"></div>
<svg class="a" style="left:0;top:0;" width="191" height="386" viewBox="0 0 191 386"><rect x="12" y="48" width="22" height="22" rx="2" fill="#3b3b3b"/><rect x="18.5" y="54.5" width="9" height="9" fill="none" stroke="#e4e4e4" stroke-width="1.200"/><rect x="17" y="53" width="3" height="3" fill="#e4e4e4"/><rect x="17" y="62" width="3" height="3" fill="#e4e4e4"/><rect x="26" y="53" width="3" height="3" fill="#e4e4e4"/><rect x="26" y="62" width="3" height="3" fill="#e4e4e4"/><rect x="39" y="52" width="17" height="13" rx="1" fill="#d6d6d6"/><circle cx="47.5" cy="58.5" r="3.600" fill="#3a3a3a"/><path d="M8.9 88.2l3.6 3.6l3.6-3.6" stroke="#cfcfcf" stroke-width="1.200" fill="none"/><path d="M8.9 205.7l3.6 3.6l3.6-3.6" stroke="#cfcfcf" stroke-width="1.200" fill="none"/><rect x="10" y="113" width="24" height="27" rx="3" fill="#3b3b3b"/><g fill="none" stroke="#e4e4e4" stroke-width="1.300"><rect x="19.5" y="120" width="5" height="7" rx="2.500"/><rect x="19.5" y="126" width="5" height="7" rx="2.500"/></g><path d="M22 123v7" stroke="#e4e4e4" stroke-width="1.300"/><rect x="60.5" y="106.5" width="57" height="16" rx="2" fill="#464646" stroke="#666"/><rect x="140.5" y="106.5" width="59" height="16" rx="2" fill="#464646" stroke="#666"/><rect x="60.5" y="131.5" width="57" height="16" rx="2" fill="#464646" stroke="#666"/><rect x="140.5" y="131.5" width="59" height="16" rx="2" fill="#464646" stroke="#666"/><rect x="60.5" y="159.5" width="54" height="16" rx="2" fill="#464646" stroke="#666"/><path d="M101.5 160v15" stroke="#666"/><path d="M105.2 166.1l2.8 2.8l2.8-2.8" stroke="#cfcfcf" stroke-width="1.200" fill="none"/><path d="M54 173h-11l9-9" fill="none" stroke="#dcdcdc" stroke-width="1.300"/><path d="M48 173a5 5 0 0 0-1.500-3.500" fill="none" stroke="#dcdcdc" stroke-width="1"/><path d="M155.5 161v14" stroke="#dcdcdc" stroke-width="1" stroke-dasharray="2 1.500"/><path d="M149 163l4.500 4.500l-4.500 4.500z" fill="none" stroke="#dcdcdc" stroke-width="1.100"/><path d="M162 163l-4.500 4.500l4.500 4.500z" fill="#dcdcdc"/><path d="M177 167.5h14" stroke="#dcdcdc" stroke-width="1" stroke-dasharray="2 1.500"/><path d="M179 161l4.500 4.500l4.500-4.500z" fill="none" stroke="#dcdcdc" stroke-width="1.100"/><path d="M179 174l4.500-4.500l4.500 4.500z" fill="#dcdcdc"/><path d="M183 86l-3 3l3 3M180 89h6q4 0 4 4" fill="none" stroke="#bdbdbd" stroke-width="1.300"/><path d="M180 95.5h12" stroke="#bdbdbd" stroke-width="1.200"/><rect x="96.5" y="225.5" width="32" height="20" rx="2" fill="#464646" stroke="#666"/><rect x="99" y="228" width="27" height="15" fill="#3300ff"/><rect x="59.5" y="253.5" width="31" height="20" rx="2" fill="#464646" stroke="#666"/><rect x="62" y="256" width="26" height="15" fill="#3300ff"/><rect x="67.5" y="260.5" width="15" height="6" fill="#3a2adf" stroke="#fff" stroke-width="1.200"/><rect x="60.5" y="282.5" width="77" height="16" rx="2" fill="#464646" stroke="#666"/><path d="M123.5 283v15" stroke="#666"/><path d="M127.7 289.1l2.8 2.8l2.8-2.8" stroke="#cfcfcf" stroke-width="1.200" fill="none"/><rect x="144.5" y="282.5" width="59" height="16" rx="2" fill="#464646" stroke="#666"/><path d="M148 290.5h50" stroke="#f2f2f2" stroke-width="1.400"/><rect x="61.5" y="305.5" width="40" height="16" rx="2" fill="#464646" stroke="#666"/><path d="M91.2 312.6l2.8 2.8l2.8-2.8" stroke="#cfcfcf" stroke-width="1.200" fill="none"/><rect x="107.5" y="305.5" width="40" height="16" rx="2" fill="#464646" stroke="#666"/><path d="M137.2 312.6l2.8 2.8l2.8-2.8" stroke="#cfcfcf" stroke-width="1.200" fill="none"/><rect x="153.5" y="305.5" width="40" height="16" rx="2" fill="#464646" stroke="#666"/><path d="M183.2 312.6l2.8 2.8l2.8-2.8" stroke="#cfcfcf" stroke-width="1.200" fill="none"/><rect x="70.5" y="308.5" width="11" height="11" fill="#111" stroke="#f0f0f0" stroke-width="1"/><rect x="73.5" y="311.5" width="5" height="5" fill="none" stroke="#f0f0f0" stroke-width="1"/><path d="M116 314h5" stroke="#f0f0f0" stroke-width="1.300"/><rect x="121" y="309" width="8" height="10" fill="#f0f0f0"/><rect x="121" y="312.5" width="4" height="3" fill="#222"/><path d="M164 320v-11h11v4h-6v7z" fill="#f0f0f0"/><rect x="169" y="313" width="5" height="4" fill="#222"/><path d="M8.9 348.2l3.6 3.6l3.6-3.6" stroke="#cfcfcf" stroke-width="1.200" fill="none"/></svg>
<span class="t" style="left:10.0px;top:19.0px;font-size:10.18px;line-height:13px;color:#ffffff;transform:scaleX(0.930);font-weight:bold;">Свойства</span>
<span class="t" style="left:72.0px;top:18.5px;font-size:10.93px;line-height:14px;color:#b4b4b4;transform:scaleX(0.930);font-weight:bold;">Коррекция</span>
<span class="t" style="left:136.0px;top:18.0px;font-size:11.5px;line-height:15px;color:#b4b4b4;transform:scaleX(0.940);font-weight:bold;">Библиотеки</span>
<span class="t" style="left:64.0px;top:52.5px;font-size:10.72px;line-height:14px;color:#e2e2e2;transform:scaleX(0.930);">Свойства фигуры</span>
<span class="t" style="left:24.0px;top:83.0px;font-size:11.5px;line-height:15px;color:#f2f2f2;transform:scaleX(0.929);font-weight:bold;">Перспектива</span>
<span class="t" style="left:48.0px;top:107.5px;font-size:11px;line-height:14px;color:#d0d0d0;">Ш</span>
<span class="t" style="left:65.0px;top:107.5px;font-size:10.91px;line-height:14px;color:#ececec;transform:scaleX(0.930);">81,99 пикс</span>
<span class="t" style="left:128.0px;top:107.5px;font-size:11px;line-height:14px;color:#d0d0d0;">X</span>
<span class="t" style="left:145.0px;top:107.0px;font-size:11.5px;line-height:15px;color:#ececec;transform:scaleX(0.920);">773,22 пикс</span>
<span class="t" style="left:48.5px;top:132.5px;font-size:11px;line-height:14px;color:#d0d0d0;">В</span>
<span class="t" style="left:65.0px;top:132.0px;font-size:11.5px;line-height:15px;color:#ececec;transform:scaleX(0.935);">5 пикс.</span>
<span class="t" style="left:128.0px;top:132.5px;font-size:11px;line-height:14px;color:#d0d0d0;">Y</span>
<span class="t" style="left:145.0px;top:132.0px;font-size:11.5px;line-height:15px;color:#ececec;transform:scaleX(0.920);">777,88 пикс</span>
<span class="t" style="left:64.0px;top:160.0px;font-size:11.5px;line-height:15px;color:#ececec;transform:scaleX(0.941);">-30,00°</span>
<span class="t" style="left:23.0px;top:200.0px;font-size:11.5px;line-height:15px;color:#f2f2f2;transform:scaleX(0.949);font-weight:bold;">Внешний вид</span>
<span class="t" style="left:40.0px;top:228.0px;font-size:10.73px;line-height:14px;color:#d6d6d6;transform:scaleX(0.930);">Заполнить</span>
<span class="t" style="left:16.0px;top:256.5px;font-size:10.47px;line-height:14px;color:#d6d6d6;transform:scaleX(0.930);">Обводка</span>
<span class="t" style="left:65.0px;top:283.0px;font-size:11.5px;line-height:15px;color:#ececec;transform:scaleX(0.935);">1 пикс.</span>
<div class="a" style="left:0;top:340px;width:191px;height:13px;overflow:hidden;"><span class="t" style="left:23.0px;top:4.5px;font-size:11.5px;line-height:15px;color:#f2f2f2;transform:scaleX(0.906);font-weight:bold;">Стрелки</span></div>
</div>
<div class="a" style="left:0px;top:1040px;width:1920px;height:40px;background:#0c2a3b;"></div>
<svg class="a" style="left:0;top:0;" width="1920" height="1080" viewBox="0 0 1920 1080"><path d="M16 1053.200l6.500-0.900v6.300h-6.500zM23.300 1052.200l8.700-1.200v7.600h-8.700zM16 1059.400h6.500v6.300l-6.500-0.900zM23.300 1059.400h8.700v7.600l-8.700-1.200z" fill="#fff"/><g stroke="#fff" stroke-width="1.300" fill="none"><rect x="64.500" y="1054.500" width="9" height="10"/><path d="M64.500 1051.500h9M64.500 1067.500h9M78 1051v4M78 1057v6M78 1065v3"/></g><path d="M112 1052h7l2 2h11v3h-20z" fill="#e9a50a"/><rect x="112" y="1055" width="21" height="14" rx="1" fill="#ffd766"/><rect x="117" y="1062" width="11" height="7" fill="#2d8fe0"/><rect x="119.500" y="1065" width="6" height="4" fill="#ffd766"/><circle cx="171.500" cy="1060" r="11.500" fill="#e33b2e"/><path d="M171.500 1060L161.500 1054.300A11.500 11.500 0 0 0 165.800 1070z" fill="#2da94f"/><path d="M171.500 1060L165.800 1070A11.500 11.500 0 0 0 183 1060z" fill="#fbbc05"/><path d="M171.500 1060h11.500a11.500 11.500 0 0 0-1.500-5.700h-10z" fill="#e33b2e"/><circle cx="171.500" cy="1060" r="5.300" fill="#fff"/><circle cx="171.500" cy="1060" r="4.200" fill="#4a8af4"/><path d="M210 1052q10-5 20 0l3 2v6q-3 9-13 10q-10-1-13-10v-6z" fill="#dfe6ea"/><circle cx="220" cy="1061" r="7" fill="#2a4d63"/><circle cx="220" cy="1061" r="4" fill="#9fd3f0"/><circle cx="220" cy="1061" r="1.800" fill="#123"/><rect x="259.500" y="1048.500" width="19" height="24" rx="1.500" fill="#8a949c" stroke="#5d666d"/><rect x="262" y="1051" width="14" height="5" fill="#35c3f3"/><rect x="262" y="1058" width="4" height="4" fill="#e8ecef"/><rect x="262" y="1063" width="4" height="4" fill="#e8ecef"/><rect x="262" y="1068" width="4" height="4" fill="#e8ecef"/><rect x="267" y="1058" width="4" height="4" fill="#e8ecef"/><rect x="267" y="1063" width="4" height="4" fill="#e8ecef"/><rect x="267" y="1068" width="4" height="4" fill="#e8ecef"/><rect x="272" y="1058" width="4" height="4" fill="#e8ecef"/><rect x="272" y="1063" width="4" height="4" fill="#2d6fd0"/><rect x="272" y="1068" width="4" height="4" fill="#2d6fd0"/><circle cx="318.500" cy="1060" r="11.500" fill="#2aa3e0"/><path d="M311.500 1059.800l13.500-5.300q1-0.300 0.800 0.900l-2.300 10.800q-0.300 1.100-1.300 0.500l-3.500-2.600l-1.800 1.700q-0.400 0.300-0.500-0.300l0.300-2.900l6.300-5.700l-7.800 4.900l-3.500-1.100q-0.800-0.400-0.200-0.900z" fill="#fff"/><rect x="357.500" y="1050.500" width="21" height="17" fill="#f4f7fa" stroke="#9aa"/><rect x="363" y="1053" width="10" height="12" fill="#1c6fd6"/><path d="M359 1054h3M359 1057h3M359 1060h3M359 1063h3M374 1054h3M374 1057h3M374 1060h3M374 1063h3" stroke="#778" stroke-width="1"/><rect x="393" y="1040" width="48" height="40" fill="#2f4a5a"/><rect x="393" y="1078" width="48" height="2" fill="#6cc0f4"/><rect x="405.500" y="1048.500" width="23" height="22" rx="4" fill="#001e36" stroke="#0b3556"/><rect x="455.500" y="1052.500" width="21" height="15" rx="1.500" fill="#30402c" stroke="#8a8a7a"/><path d="M459 1063l2-5l2 5l2-5l2 5l2-5" stroke="#40d050" stroke-width="1.300" fill="none"/><rect x="452" y="1055" width="3" height="3" fill="#b8a050"/><rect x="452" y="1061" width="3" height="3" fill="#b8a050"/><defs><linearGradient id="mx" x1="0" y1="0" x2="1" y2="1"><stop offset="0" stop-color="#2d8cff"/><stop offset="1" stop-color="#a24cf0"/></linearGradient></defs><rect x="503" y="1048" width="24" height="24" rx="7" fill="url(#mx)"/><circle cx="515" cy="1060" r="6" fill="none" stroke="#fff" stroke-width="3"/><path d="M509 1067l1.500-4.500l3 3z" fill="#fff"/><rect x="552" y="1048" width="22" height="24" rx="6" fill="#f2f6f5"/><circle cx="612.500" cy="1060" r="11" fill="#fff" stroke="#111" stroke-width="2"/><circle cx="612.500" cy="1060" r="6.500" fill="#f00000"/><circle cx="661" cy="1060" r="11" fill="#11809a" stroke="#bfe6ee" stroke-width="1.300"/><rect x="103" y="1078" width="39" height="2" fill="#6cc0f4"/><rect x="152" y="1078" width="39" height="2" fill="#6cc0f4"/><rect x="641" y="1078" width="40" height="2" fill="#6cc0f4"/><path d="M1651 1063l6-6l6 6" stroke="#fff" stroke-width="1.400" fill="none"/><path d="M1673 1057.500h3l4-3.500v12l-4-3.500h-3z" fill="none" stroke="#fff" stroke-width="1.200"/><path d="M1682.500 1057q1.500 3 0 6M1685 1055q2.500 5 0 10M1687.500 1053.500q3.500 6.500 0 13" stroke="#fff" stroke-width="1.100" fill="none"/><circle cx="1705" cy="1060" r="6.500" fill="#0a0a0a"/><circle cx="1705" cy="1060" r="3.200" fill="none" stroke="#222" stroke-width="1"/><rect x="1724.500" y="1054.500" width="7" height="9" rx="2" fill="none" stroke="#fff" stroke-width="1.200"/><path d="M1731.500 1058l3-1.500v5l-3-1.500M1724 1052q4-2.500 8 0M1724 1068q4 2.500 8 0" stroke="#fff" stroke-width="1.100" fill="none"/><rect x="1749.500" y="1054.500" width="11" height="8" fill="none" stroke="#fff" stroke-width="1.200"/><path d="M1752 1066.500h8M1755.500 1063v3M1745.500 1054.500h4M1745.500 1054.500v8h3" stroke="#fff" stroke-width="1.200" fill="none"/><rect x="1745" y="1055" width="3" height="2.500" fill="#fff"/><rect x="1867" y="1040" width="40" height="40" fill="#1e3a4a"/><path d="M1879 1053h17v12h-12l-3 3v-3h-2z" fill="#fff"/><path d="M1882 1056.500h11M1882 1059h11M1882 1061.500h8" stroke="#1e3a4a" stroke-width="1"/><circle cx="1894.500" cy="1066.500" r="6" fill="#0c2a3b" stroke="#9aa6ad" stroke-width="1.200"/><rect x="1914.500" y="1040" width="1" height="40" fill="#6a7a84"/></svg>
<span class="t" style="left:409.5px;top:1051.0px;font-size:13px;line-height:17px;color:#31a8ff;transform:scaleX(0.943);font-weight:bold;">Ps</span>
<span class="t" style="left:557.2px;top:1049.0px;font-size:17px;line-height:22px;color:#0f8f7f;font-weight:bold;font-family:"DejaVu Sans","Liberation Sans",sans-serif;">∃</span>
<span class="t" style="left:656.2px;top:1051.0px;font-size:14px;line-height:18px;color:#e8f6fa;font-weight:bold;font-family:"DejaVu Sans","Liberation Sans",sans-serif;">∃</span>
<span class="t" style="left:1892.0px;top:1060.5px;font-size:9px;line-height:12px;color:#fff;font-weight:bold;">1</span>
<span class="t" style="left:1773.0px;top:1051.5px;font-size:12px;line-height:16px;color:#fff;transform:scaleX(0.916);">РУС</span>
<span class="t" style="left:1820.2px;top:1043.0px;font-size:12px;line-height:16px;color:#fff;transform:scaleX(0.916);">17:58</span>
<span class="t" style="left:1807.0px;top:1061.0px;font-size:12px;line-height:16px;color:#fff;transform:scaleX(0.913);">09.11.2025</span>
<div class="a" style="left:1789px;top:1021px;width:132px;height:19px;background:#fff;border:1px solid #d0d0d0;box-sizing:border-box;box-shadow:0 1px 3px rgba(0,0,0,0.4);"></div>
<span class="t" style="left:1796.0px;top:1022.5px;font-size:11.5px;line-height:15px;color:#555a66;transform:scaleX(1.005);">1 новое уведомление</span>
</body></html>
